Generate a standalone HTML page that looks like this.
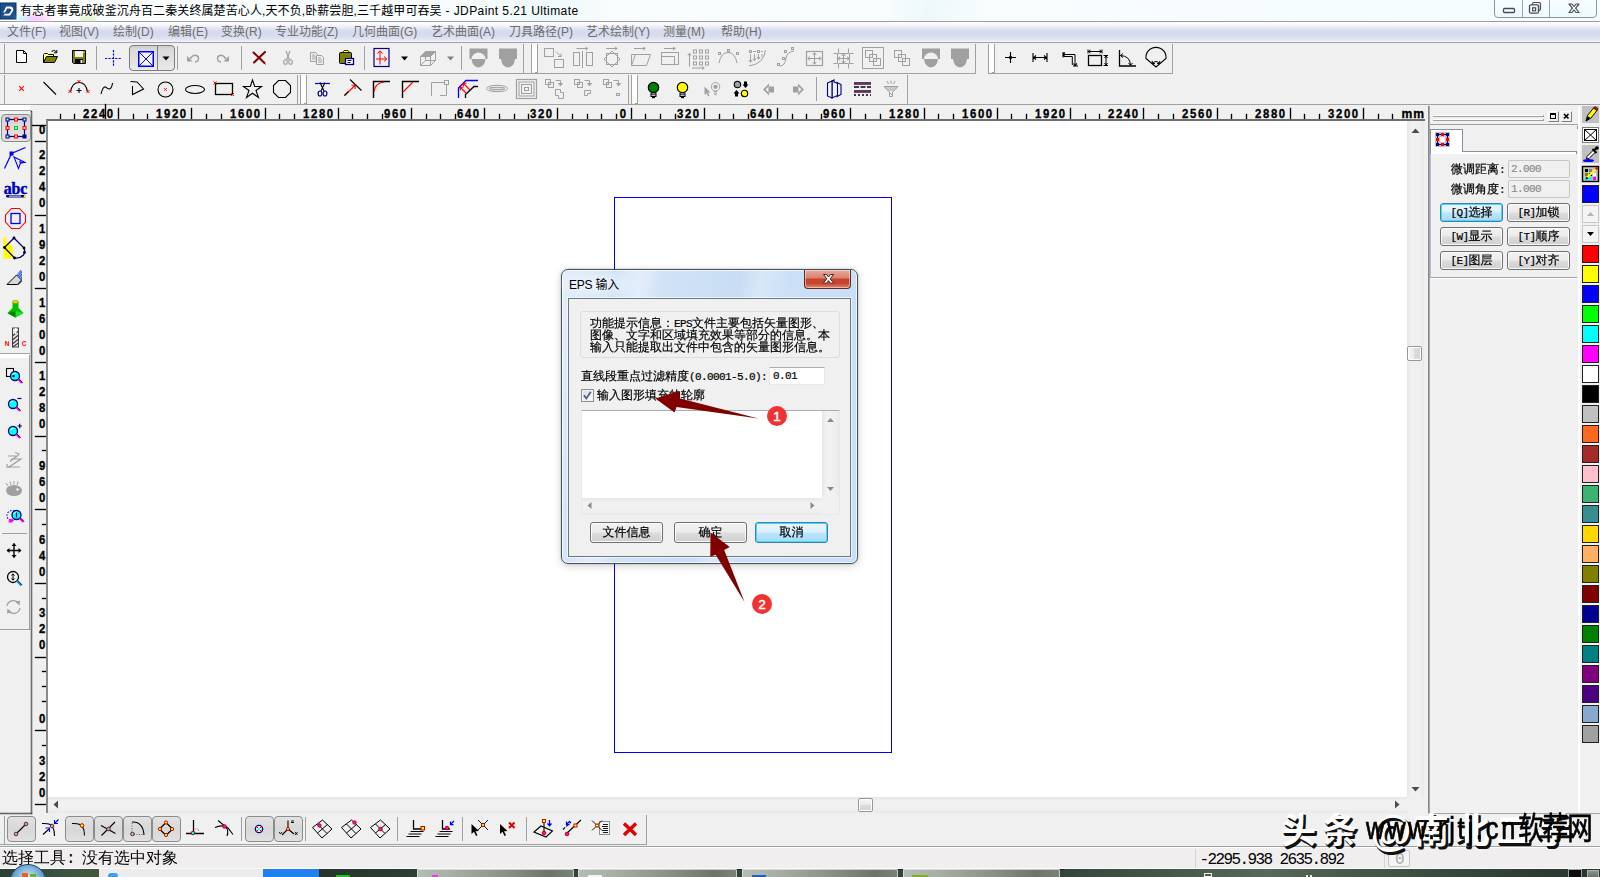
<!DOCTYPE html>
<html lang="zh-CN"><head><meta charset="utf-8"><title>JDPaint 5.21 Ultimate</title>
<style>
*{box-sizing:border-box;margin:0;padding:0}
html,body{width:1600px;height:877px;overflow:hidden;background:#f0f0f0}
body{font-family:"Liberation Sans","Noto Sans CJK SC",sans-serif;font-size:12px;color:#000}
#app{position:relative;width:1600px;height:877px;overflow:hidden;background:#f0f0f0}
.abs{position:absolute}
svg{position:absolute;overflow:visible}
.song{font-family:"Liberation Mono","WenQuanYi Zen Hei","Noto Sans CJK SC",sans-serif;-webkit-text-stroke-width:.2px}
/* title bar */
#title{position:absolute;left:0;top:0;width:1600px;height:22px;background:linear-gradient(100deg,#fbfeff 0%,#f6fcfd 30%,#eef8fa 34%,#f7fcfd 38%,#f9fdfe 55%,#eef8fa 58%,#f8fdfe 62%,#f4fcff 100%);border-bottom:1px solid #9b9b9b}
#title .txt{position:absolute;left:20px;top:2px;font-size:12px;line-height:19px;white-space:nowrap;color:#000;letter-spacing:.1px}
#title .lat{letter-spacing:.42px}
#menubar{position:absolute;left:0;top:22px;width:1600px;height:21px;background:linear-gradient(#fefeff 0,#f6f7fc 3px,#e0e3f2 7px,#d7dbee 9px,#d7dbee 13px,#e0e3f2 17px,#eceef8 19px,#f2f3fa 20px,#a4a4a4 20px,#a4a4a4 21px)}
#menubar span{position:absolute;top:1px;font-size:12px;line-height:18px;color:#6d6d6d;white-space:nowrap}
.song .l,.l{font-family:"Liberation Mono",monospace;font-size:11px;letter-spacing:-0.6px}
.btn7{position:absolute;border:1px solid #707070;border-radius:3px;background:linear-gradient(#f2f2f2 0,#ebebeb 48%,#dddddd 52%,#cfcfcf 100%);box-shadow:inset 0 0 0 1px rgba(255,255,255,.85);text-align:center;font-size:12px;white-space:nowrap;color:#000}
.btn7.def{border-color:#3c7fb1;background:linear-gradient(#eaf6fd 0,#d9f0fc 48%,#bee6fd 52%,#a7d9f5 100%);box-shadow:inset 0 0 0 1px #48d8fb}
.sb16{font-family:"Liberation Mono","WenQuanYi Zen Hei","Noto Sans CJK SC",sans-serif;font-size:16px;line-height:19px;white-space:nowrap;color:#000}
.l8{font-family:"Liberation Mono",monospace;font-size:16px;letter-spacing:-1.6px}

</style></head>
<body>
<div id="app">
<!-- chrome -->
<div id="title">
<svg style="left:0;top:3px" width="16" height="16" viewBox="0 0 16 16"><rect x="0" y="0" width="16" height="16" fill="#1d4f8f"/><rect x="0" y="0" width="16" height="16" fill="none" stroke="#0e2f5e" stroke-width="1"/><path d="M6.2 3.5 L10.5 3.5 Q14.2 4.2 13 8 L10 12.5 L3.2 12.5 L5 10.8 L9 10.8 L11.3 7.6 Q11.8 5.6 9.6 5.4 L7.2 5.4 L5 9.5 L3.2 9.5 Z" fill="#fff"/></svg>
<div class="abs" style="left:17px;top:16px;width:34px;height:5px;background:linear-gradient(90deg,#9ff,#f9f 55%,#fdf);filter:blur(2px);opacity:.8"></div>
<div class="abs" style="left:80px;top:16px;width:16px;height:5px;background:#cfe8b0;filter:blur(2px);opacity:.7"></div>
<div class="txt">有志者事竟成破釜沉舟百二秦关终属楚苦心人,天不负,卧薪尝胆,三千越甲可吞吴<span class="lat"> - JDPaint 5.21 Ultimate</span></div>
<div class="abs" style="left:1494px;top:-4px;width:103px;height:22px;border:1px solid #8a9499;border-radius:0 0 4px 4px;background:linear-gradient(#fafeff,#eefaff)"></div>
<div class="abs" style="left:1522px;top:0;width:1px;height:17px;background:#9aa3a8"></div>
<div class="abs" style="left:1549px;top:0;width:1px;height:17px;background:#9aa3a8"></div>
<svg style="left:1494px;top:0" width="103" height="18" viewBox="0 0 103 18"><rect x="9.5" y="8.5" width="11" height="4" rx="1" fill="#fff" stroke="#4a4a5a" stroke-width="1.3"/><rect x="38.5" y="2.5" width="8" height="8" rx="1.5" fill="#f0f0f0" stroke="#4a4a5a" stroke-width="1.2"/><rect x="35.5" y="4.8" width="9" height="8.4" rx="1.5" fill="#fafafa" stroke="#4a4a5a" stroke-width="1.3"/><rect x="38.6" y="7.8" width="3" height="3" fill="#fff" stroke="#4a4a5a" stroke-width="1.2"/><path d="M75 4 L78 4 L80 6.5 L82 4 L85 4 L81.6 8.2 L85 12.5 L82 12.5 L80 10 L78 12.5 L75 12.5 L78.4 8.2 Z" fill="#fff" stroke="#4a4a5a" stroke-width="1.2" stroke-linejoin="round"/></svg>
</div>
<div id="menubar">
<span style="left:7px">文件(F)</span>
<span style="left:59px">视图(V)</span>
<span style="left:113px">绘制(D)</span>
<span style="left:168px">编辑(E)</span>
<span style="left:221px">变换(R)</span>
<span style="left:275px">专业功能(Z)</span>
<span style="left:352px">几何曲面(G)</span>
<span style="left:431px">艺术曲面(A)</span>
<span style="left:509px">刀具路径(P)</span>
<span style="left:586px">艺术绘制(Y)</span>
<span style="left:663px">测量(M)</span>
<span style="left:721px">帮助(H)</span>
</div>
<!-- toolbars -->
<div class="abs" style="left:129px;top:45px;width:46px;height:26px;border:1px solid #7c7c7c;border-radius:4px;background:linear-gradient(#cfcfcf 0,#dadada 15%,#e9e9e9 100%)"></div><svg style="left:0;top:0" width="1600" height="110" viewBox="0 0 1600 110"><rect x="0" y="73" width="976" height="1" fill="#a0a0a0"/><rect x="988" y="73" width="185" height="1" fill="#a0a0a0"/><rect x="0" y="104" width="1600" height="1" fill="#a0a0a0"/><rect x="4" y="44" width="1" height="30" fill="#a0a0a0"/><rect x="523" y="44" width="1" height="30" fill="#a0a0a0"/><rect x="531" y="44" width="1" height="29" fill="#a0a0a0"/><rect x="532" y="44" width="5" height="28" fill="#fff"/><rect x="537" y="44" width="1" height="29" fill="#a0a0a0"/><rect x="535" y="72" width="2" height="1" fill="#a0a0a0"/><rect x="975" y="44" width="1" height="30" fill="#a0a0a0"/><rect x="988" y="44" width="1" height="29" fill="#a0a0a0"/><rect x="989" y="44" width="5" height="28" fill="#fff"/><rect x="994" y="44" width="1" height="29" fill="#a0a0a0"/><rect x="992" y="72" width="2" height="1" fill="#a0a0a0"/><rect x="1172" y="44" width="1" height="30" fill="#a0a0a0"/><rect x="4" y="75" width="1" height="30" fill="#a0a0a0"/><rect x="297" y="75" width="1" height="30" fill="#a0a0a0"/><rect x="300" y="75" width="1" height="29" fill="#a0a0a0"/><rect x="301" y="75" width="5" height="28" fill="#fff"/><rect x="306" y="75" width="1" height="29" fill="#a0a0a0"/><rect x="304" y="103" width="2" height="1" fill="#a0a0a0"/><rect x="628" y="75" width="1" height="30" fill="#a0a0a0"/><rect x="631" y="75" width="1" height="29" fill="#a0a0a0"/><rect x="632" y="75" width="5" height="28" fill="#fff"/><rect x="637" y="75" width="1" height="29" fill="#a0a0a0"/><rect x="635" y="103" width="2" height="1" fill="#a0a0a0"/><rect x="907" y="75" width="1" height="30" fill="#a0a0a0"/><g transform="translate(21,58)"><path d="M-4.5 -7.5 L2.5 -7.5 L5.5 -4.5 L5.5 4.5 L-4.5 4.5 Z" fill="#fff" stroke="#000" stroke-width="1"/><path d="M2.5 -7.5 L2.5 -4.5 L5.5 -4.5" fill="none" stroke="#000" stroke-width="1"/></g><g transform="translate(50,58)"><path d="M-6.5 4.5 L-6.5 -3.5 L-5.5 -4.5 L-2.5 -4.5 L-1.5 -3.5 L3.5 -3.5 L3.5 -1.5" fill="#ffff80" stroke="#000" stroke-width="1"/><path d="M-6.5 4.5 L-3.5 -1.5 L7.5 -1.5 L4.5 4.5 Z" fill="#808000" stroke="#000" stroke-width="1"/><path d="M1.5 -6.5 Q4.5 -9 6.5 -6 M6.8 -8 L6.8 -5.2 L4 -5.2" fill="none" stroke="#000" stroke-width="1"/></g><g transform="translate(79,58)"><path d="M-6.5 -7.5 L6.5 -7.5 L6.5 5.5 L-5.5 5.5 L-6.5 4.5 Z" fill="#808000" stroke="#000" stroke-width="1"/><rect x="-4" y="-7" width="8" height="6" fill="#f0f0f0"/><rect x="4.5" y="-6.5" width="1" height="1.5" fill="#fff"/><rect x="-4" y="1" width="8" height="4.5" fill="#000"/><rect x="1.5" y="2" width="2" height="3" fill="#f0f0f0"/></g><rect x="96" y="46" width="1" height="24" fill="#a0a0a0"/><g transform="translate(113.5,58.5)"><path d="M0 -8.5 L0 8.5 M-8.5 0 L8.5 0" stroke="#00f" stroke-width="1.2" stroke-dasharray="2.2 1.2" fill="none"/></g><rect x="157" y="46" width="1" height="24" fill="#7c7c7c"/><rect x="138.75" y="51.75" width="14.5" height="14.5" fill="#f6f6e6" stroke="#00f" stroke-width="1.5"/><path d="M139 52 L153 66 M153 52 L139 66" stroke="#00f" stroke-width="1" fill="none"/><g transform="translate(166,58.5)"><path d="M-3.5 -2 L3.5 -2 L0 2 Z" fill="#000"/></g><rect x="177" y="46" width="1" height="24" fill="#a0a0a0"/><g transform="translate(193,58)"><path d="M-6 -2 L-6 3.5 L-0.5 3.5 Z" fill="#a0a0a0"/><path d="M-3 1 Q0 -3.5 3.5 -2.5 Q6.5 -1 5 2.5 Q4 4 2 4" fill="none" stroke="#a0a0a0" stroke-width="1.4"/></g><g transform="translate(223,58)"><g transform="scale(-1,1)"><path d="M-6 -2 L-6 3.5 L-0.5 3.5 Z" fill="#a0a0a0"/><path d="M-3 1 Q0 -3.5 3.5 -2.5 Q6.5 -1 5 2.5 Q4 4 2 4" fill="none" stroke="#a0a0a0" stroke-width="1.4"/></g></g><rect x="241" y="46" width="1" height="24" fill="#a0a0a0"/><g transform="translate(259.5,58)"><path d="M-6 -5.5 L5 5 M5.5 -6 L-5.5 4.5" stroke="#800000" stroke-width="2" stroke-linecap="round" fill="none"/><path d="M4.5 5 L6 6.5" stroke="#800000" stroke-width="1"/></g><g transform="translate(288,58)"><path d="M-2 -7 L1.5 2 M2 -7 L-1.5 2" stroke="#a0a0a0" stroke-width="1.2" fill="none"/><ellipse cx="-2.5" cy="4" rx="1.8" ry="2.3" fill="none" stroke="#a0a0a0" stroke-width="1.1"/><ellipse cx="2.5" cy="4" rx="1.8" ry="2.3" fill="none" stroke="#a0a0a0" stroke-width="1.1"/></g><g transform="translate(314,57)"><path d="M-3.5 -4.5 L1.5 -4.5 L3.5 -2.5 L3.5 4.5 L-3.5 4.5 Z" fill="#f0f0f0" stroke="#a0a0a0"/><path d="M-2 -2 L1 -2 M-2 0 L2 0 M-2 2 L2 2" stroke="#a0a0a0" stroke-width="1"/></g><g transform="translate(320,60)"><path d="M-3.5 -4.5 L1.5 -4.5 L3.5 -2.5 L3.5 4.5 L-3.5 4.5 Z" fill="#f0f0f0" stroke="#a0a0a0"/><path d="M-2 -2 L1 -2 M-2 0 L2 0 M-2 2 L2 2" stroke="#a0a0a0" stroke-width="1"/></g><g transform="translate(346,58)"><rect x="-6.5" y="-5.5" width="12" height="11" rx="1" fill="#808000" stroke="#000"/><path d="M-3.5 -5.5 L-2 -7.5 L2 -7.5 L3.5 -5.5 Z" fill="#ffff00" stroke="#000" stroke-width="0.8"/><rect x="-0.5" y="0.5" width="8" height="6" fill="#fff" stroke="#000080" stroke-width="1.3"/><path d="M1.5 2.5 L5.5 2.5 M1.5 4.5 L4.5 4.5" stroke="#000080" stroke-width="1"/></g><rect x="364" y="46" width="1" height="24" fill="#a0a0a0"/><g transform="translate(381.5,57.5)"><rect x="-7.5" y="-9" width="15" height="18" fill="none" stroke="#000080" stroke-width="1.2"/><path d="M-1.5 7 L-1.5 -6.5 M-4 -4 L-1.5 -6.8 L1 -4 M-5.5 1.5 L5 1.5 M2.5 -1 L5.3 1.5 L2.5 4" stroke="#f00" stroke-width="1" fill="none"/></g><g transform="translate(404.5,58.5)"><path d="M-3.5 -2 L3.5 -2 L0 2 Z" fill="#000"/></g><g transform="translate(428,58)"><path d="M-7.5 -1.5 L2.5 -1.5 L2.5 7.5 L-7.5 7.5 Z M-7.5 -1.5 L-2.5 -6.5 L7.5 -6.5 L2.5 -1.5 M7.5 -6.5 L7.5 2.5 L2.5 7.5 M-7.5 7.5 L-2.5 2.5 L7.5 2.5 M-2.5 2.5 L-2.5 -6.5" fill="none" stroke="#a0a0a0" stroke-width="1"/><path d="M-7.5 -1.5 L-2.5 -6.5 L7.5 -6.5 L2.5 -1.5 Z" fill="#a0a0a0"/></g><g transform="translate(450.5,58.5)"><path d="M-3.5 -2 L3.5 -2 L0 2 Z" fill="#808080"/></g><rect x="461" y="46" width="1" height="24" fill="#a0a0a0"/><g transform="translate(478.5,58)"><path d="M-9 -9.5 L9 -9.5 L9 1 L7 1 Q6 9 0 9.5 Q-6 9 -7 1 L-9 1 Z" fill="#a0a0a0"/><path d="M-7 1 A7 6.5 0 0 1 7 1 Z" fill="#f0f0f0"/></g><g transform="translate(508,58)"><path d="M-9 -9.5 L9 -9.5 L9 1 L7 1 Q6 9 0 9.5 Q-6 9 -7 1 L-9 1 Z" fill="#a0a0a0"/></g><g transform="translate(553.5,58)"><rect x="-9" y="-9.5" width="9" height="8" fill="none" stroke="#a0a0a0" stroke-width="1"/><rect x="1" y="1.5" width="9" height="8" fill="none" stroke="#a0a0a0" stroke-width="1"/><path d="M2.5 -6.5 L7.5 -1.5 M7.5 -4.5 L7.5 -1.5 L4.5 -1.5" fill="none" stroke="#a0a0a0" stroke-width="1"/></g><g transform="translate(583,58)"><rect x="-9.5" y="-5.5" width="6" height="13" fill="none" stroke="#a0a0a0" stroke-width="1"/><rect x="3.5" y="-5.5" width="6" height="13" fill="none" stroke="#a0a0a0" stroke-width="1"/><path d="M-0.5 -7 L-0.5 10 M-6.5 -9.5 L4.5 -9.5 M2.5 -11 L4.8 -9.5 L2.5 -8" fill="none" stroke="#a0a0a0" stroke-width="1"/></g><g transform="translate(612,59)"><rect x="-5.5" y="-5.5" width="11" height="11" fill="none" stroke="#a0a0a0" stroke-width="1"/><path d="M0 -8 L8 0 L0 8 L-8 0 Z" fill="none" stroke="#a0a0a0" stroke-width="1"/><path d="M-6 -10.5 L5 -10.5 M3 -12 L5.3 -10.5 L3 -9" fill="none" stroke="#a0a0a0" stroke-width="1"/></g><g transform="translate(641,58)"><path d="M-9.5 7.5 L-5.5 -3.5 L9.5 -3.5 L5.5 7.5 Z M-9.5 7.5 L-9.5 -3.5 L-5.5 -3.5" fill="none" stroke="#a0a0a0" stroke-width="1"/><path d="M-7 -9.5 L4 -9.5 M2 -11 L4.3 -9.5 L2 -8" fill="none" stroke="#a0a0a0" stroke-width="1"/></g><g transform="translate(670,58)"><rect x="-8.5" y="-5.5" width="17" height="12" fill="none" stroke="#a0a0a0" stroke-width="1"/><path d="M-8.500 -1.500 L4.500 -1.500 L4.500 6.500" fill="none" stroke="#a0a0a0" stroke-width="1"/><path d="M-6 -9.500 L5 -9.500 M3 -11 L5.3 -9.500 L3 -8" fill="none" stroke="#a0a0a0" stroke-width="1"/></g><g transform="translate(698,58.5)"><rect x="-4.5" y="-8.5" width="3" height="3" fill="none" stroke="#a0a0a0" stroke-width="1"/><rect x="-4.5" y="-2.5" width="3" height="3" fill="none" stroke="#a0a0a0" stroke-width="1"/><rect x="-4.5" y="3.5" width="3" height="3" fill="none" stroke="#a0a0a0" stroke-width="1"/><rect x="1.5" y="-8.5" width="3" height="3" fill="none" stroke="#a0a0a0" stroke-width="1"/><rect x="1.5" y="-2.5" width="3" height="3" fill="none" stroke="#a0a0a0" stroke-width="1"/><rect x="1.5" y="3.5" width="3" height="3" fill="none" stroke="#a0a0a0" stroke-width="1"/><rect x="7.5" y="-8.5" width="3" height="3" fill="none" stroke="#a0a0a0" stroke-width="1"/><rect x="7.5" y="-2.5" width="3" height="3" fill="none" stroke="#a0a0a0" stroke-width="1"/><rect x="7.5" y="3.5" width="3" height="3" fill="none" stroke="#a0a0a0" stroke-width="1"/><path d="M-8.5 8 L-8.5 -5 M-10 -3 L-8.5 -5.300 L-7 -3 M-6 9.500 L6 9.500 M4 8 L6.300 9.500 L4 11" fill="none" stroke="#a0a0a0" stroke-width="1"/></g><g transform="translate(728,58)"><path d="M-9 5 Q-7 -5.500 0 -5.500 Q7 -5.500 9 5" fill="none" stroke="#a0a0a0" stroke-width="1"/><rect x="-9.5" y="-5.5" width="2" height="2" fill="none" stroke="#a0a0a0" stroke-width="1"/><rect x="-0.5" y="-8.5" width="2" height="2" fill="none" stroke="#a0a0a0" stroke-width="1"/><rect x="8.5" y="-5.500" width="2" height="2" fill="none" stroke="#a0a0a0" stroke-width="1"/></g><g transform="translate(757,58)"><path d="M-8 8 Q7 6 8.500 -8 M-6.500 -4 L-6.500 4 M-8 2 L-6.500 4.300 L-5 2 M-2.500 -4 L-2.500 2.500 M-4 0.500 L-2.500 2.800 L-1 0.500 M1.500 -4 L1.500 1 M0 -1 L1.500 1.300 L3 -1 M5 -4 L5 -1" fill="none" stroke="#a0a0a0" stroke-width="1"/><rect x="-7.500" y="-7.500" width="2" height="2" fill="none" stroke="#a0a0a0" stroke-width="1"/><rect x="0.500" y="-7.500" width="2" height="2" fill="none" stroke="#a0a0a0" stroke-width="1"/><path d="M-4 -6.500 L-1 -6.500 M4 -6.500 L6 -6.500" fill="none" stroke="#a0a0a0" stroke-width="1"/></g><g transform="translate(786,58)"><path d="M-6 8 Q-1 8 0 0 Q1 -6 8 -7" fill="none" stroke="#a0a0a0" stroke-width="1"/><rect x="-8.500" y="5.500" width="2" height="2" fill="none" stroke="#a0a0a0" stroke-width="1"/><rect x="-3.500" y="-0.500" width="2" height="2" fill="none" stroke="#a0a0a0" stroke-width="1"/><rect x="-1.500" y="-7.500" width="2" height="2" fill="none" stroke="#a0a0a0" stroke-width="1"/><rect x="5.500" y="-10.500" width="2" height="2" fill="none" stroke="#a0a0a0" stroke-width="1"/></g><g transform="translate(814.5,58.5)"><rect x="-8" y="-7" width="16" height="14" fill="none" stroke="#a0a0a0" stroke-width="1.2"/><path d="M0 -5.500 L0 5.500 M-6.500 0 L6.500 0 M-1.800 -3.500 L0 -5.800 L1.800 -3.500 M-1.800 3.500 L0 5.800 L1.800 3.500 M-4.500 -1.800 L-6.800 0 L-4.500 1.800 M4.500 -1.800 L6.800 0 L4.500 1.800" fill="none" stroke="#a0a0a0" stroke-width="1"/></g><g transform="translate(843.5,58.5)"><path d="M-5 -10 L-5 -5 L5 -5 L5 -10 M-5 10 L-5 5 L5 5 L5 10 M-10 -5 L-6 -5 L-6 5 L-10 5 M10 -5 L6 -5 L6 5 L10 5" fill="none" stroke="#a0a0a0" stroke-width="1"/><path d="M0 -4.500 L0 4.500 M-5.500 0 L5.500 0 M-1.800 -2.500 L0 -4.800 L1.800 -2.500 M-1.800 2.500 L0 4.800 L1.800 2.500 M-3.500 -1.800 L-5.800 0 L-3.500 1.800 M3.500 -1.800 L5.800 0 L3.500 1.800" fill="none" stroke="#a0a0a0" stroke-width="1"/></g><g transform="translate(873,58)"><rect x="-10.500" y="-10.500" width="21" height="21" fill="none" stroke="#a0a0a0" stroke-width="1"/><rect x="-7.500" y="-7.500" width="7" height="7" fill="none" stroke="#a0a0a0" stroke-width="1"/><rect x="-3.500" y="-3.500" width="7" height="7" fill="none" stroke="#a0a0a0" stroke-width="1"/><rect x="0.500" y="0.500" width="7" height="7" fill="none" stroke="#a0a0a0" stroke-width="1"/></g><g transform="translate(902,58)"><rect x="-7.500" y="-7.500" width="7" height="7" fill="none" stroke="#a0a0a0" stroke-width="1"/><rect x="-3.500" y="-3.500" width="7" height="7" fill="none" stroke="#a0a0a0" stroke-width="1"/><rect x="0.500" y="0.500" width="7" height="7" fill="none" stroke="#a0a0a0" stroke-width="1"/></g><g transform="translate(931,58)"><path d="M-9 -9.5 L9 -9.5 L9 1 L7 1 Q6 9 0 9.5 Q-6 9 -7 1 L-9 1 Z" fill="#a0a0a0"/><path d="M-7 1 A7 6.500 0 0 1 7 1 Z" fill="#f0f0f0"/></g><g transform="translate(960,58)"><path d="M-9 -9.5 L9 -9.5 L9 1 L7 1 Q6 9 0 9.5 Q-6 9 -7 1 L-9 1 Z" fill="#a0a0a0"/></g><g transform="translate(1010.5,57.5)"><path d="M0 -5.500 L0 5.500 M-5.500 0 L5.500 0" fill="none" stroke="#000" stroke-width="1.1"/><path d="M0 -2.200 L2.200 0 L0 2.200 L-2.200 0 Z" fill="#000"/></g><g transform="translate(1040,57.5)"><path d="M-7 -4.500 L-7 4.500 M7 -4.500 L7 4.500 M-6 0 L6 0 M-4 -2 L-6.300 0 L-4 2 M4 -2 L6.300 0 L4 2" fill="none" stroke="#000" stroke-width="1.1"/></g><g transform="translate(1069.5,58.5)"><path d="M-6 -4 L5.500 -4 L5.500 6.500 M-6 -2 L2.800 -2 L2.800 6.500" fill="none" stroke="#000" stroke-width="1"/><path d="M-6.500 -6.500 L-6.500 -1 M-4.500 -6 L-6.500 -4 L-4.500 -1.800 M3.500 7.500 L8.500 7.500 M4 5 L5.500 7 L7.500 5" fill="none" stroke="#000" stroke-width="1.1"/></g><g transform="translate(1097.5,59)"><rect x="-9" y="-3.500" width="13" height="10" fill="none" stroke="#000" stroke-width="1.300"/><path d="M-9.500 -9.500 L-9.500 -5.500 M4.500 -9.500 L4.500 -5.500 M-9 -7.500 L4 -7.500 M-7 -9 L-9 -7.500 L-7 -6 M2 -9 L4 -7.500 L2 -6 M6 -3.500 L10.500 -3.500 M6 6.500 L10.500 6.500 M8.500 -3 L8.500 6 M7 -1 L8.500 -3 L10 -1 M7 4 L8.500 6 L10 4" fill="none" stroke="#000" stroke-width="1"/></g><g transform="translate(1127,58.5)"><path d="M-7.500 -8.500 L-7.500 7.500 L9 7.500" fill="none" stroke="#000" stroke-width="1.300"/><path d="M-6.500 -3 Q3 -2.500 3.500 6.500 M-4 -5 L-6.500 -3 L-4 -0.800 M1.500 4.500 L3.500 6.800 L5.500 4.500" fill="none" stroke="#000" stroke-width="1"/></g><g transform="translate(1156,58)"><path d="M-10 0.500 L0 9 L10 0.500 A10.06 10.06 0 1 0 -10 0.500 Z" fill="none" stroke="#000" stroke-width="1.1"/><path d="M-3.500 5.500 Q0 1.500 3.500 5.500 M-3.800 3 L-3.500 5.600 L-1 5.300 M3.800 3 L3.500 5.600 L1 5.300" fill="none" stroke="#000" stroke-width="1"/></g><g transform="translate(21.5,88.5)"><path d="M-2.3 -2.3 L2.3 2.3 M2.3 -2.3 L-2.3 2.3" stroke="#f00" stroke-width="1.1" fill="none"/></g><g transform="translate(50,89)"><path d="M-6.500 -7 L6 5.500" fill="none" stroke="#000" stroke-width="1.1"/></g><g transform="translate(79,89)"><path d="M-8.500 3 Q-7 -6.500 0 -6.500 Q7 -6.500 8.500 3" fill="none" stroke="#000" stroke-width="1.1"/><path d="M-2.500 1.500 L2.500 1.500 M0 -1 L0 4" fill="none" stroke="#000" stroke-width="1.1"/><path d="M-10.6 0.8999999999999999 L-7.4 4.1 M-7.4 0.8999999999999999 L-10.6 4.1" stroke="#f00" stroke-width="1" fill="none"/><path d="M7.4 0.8999999999999999 L10.6 4.1 M10.6 0.8999999999999999 L7.4 4.1" stroke="#f00" stroke-width="1" fill="none"/><path d="M-1.5 -9.0 L1.5 -6.0 M1.5 -9.0 L-1.5 -6.0" stroke="#f00" stroke-width="1" fill="none"/></g><g transform="translate(107,89)"><path d="M-6 5 Q-4 -3 -1.500 -2 Q1 0 2.500 0 Q5 -1 5.500 -6" fill="none" stroke="#000" stroke-width="1.1"/></g><g transform="translate(137,89)"><path d="M-6.500 -7.500 L0 -7 L6.500 0 L-4.500 5.500 L-4.500 -3" fill="none" stroke="#000" stroke-width="1.1"/></g><g transform="translate(165.5,89.5)"><circle r="7.500" fill="none" stroke="#000" stroke-width="1.1"/><path d="M-1.3 -1.3 L1.3 1.3 M1.3 -1.3 L-1.3 1.3" stroke="#f00" stroke-width="1" fill="none"/></g><g transform="translate(195,89.5)"><ellipse rx="9.500" ry="4" fill="none" stroke="#000" stroke-width="1.1"/></g><g transform="translate(224,89)"><rect x="-8.500" y="-5.500" width="17" height="11" fill="none" stroke="#000" stroke-width="1.300"/><path d="M-10.5 -7.5 L-7.5 -4.5 M-7.5 -7.5 L-10.5 -4.5" stroke="#f00" stroke-width="1" fill="none"/><path d="M7.0 4.0 L10.0 7.0 M10.0 4.0 L7.0 7.0" stroke="#f00" stroke-width="1" fill="none"/></g><g transform="translate(252.5,89)"><path d="M0 -9 L2.200 -2.500 L9 -2.500 L3.500 1.500 L6 8.500 L0 4.200 L-6 8.500 L-3.500 1.500 L-9 -2.500 L-2.200 -2.500 Z" fill="none" stroke="#000" stroke-width="1.1"/></g><g transform="translate(282,89)"><path d="M-3.500 -8.500 L3.500 -8.500 L8.500 -3.500 L8.500 3.500 L3.500 8.500 L-3.500 8.500 L-8.500 3.500 L-8.500 -3.500 Z" fill="none" stroke="#000" stroke-width="1.1"/></g><g transform="translate(322.5,89)"><path d="M-7.500 -5.500 L7.500 -5.500" stroke="#00f" stroke-width="1.2"/><path d="M-2.500 -6.500 L1.500 2 M2.500 -6.500 L-1.500 2" fill="none" stroke="#000" stroke-width="1.1"/><ellipse cx="-2.500" cy="4.500" rx="1.900" ry="2.500" fill="none" stroke="#000080" stroke-width="1.200"/><ellipse cx="2.500" cy="4.500" rx="1.900" ry="2.500" fill="none" stroke="#000080" stroke-width="1.200"/></g><g transform="translate(352.5,88.5)"><path d="M-2.500 -9 L9 2" fill="none" stroke="#000" stroke-width="1.1"/><path d="M-8 7 L2.500 -3 M-1 -3.300 L2.700 -3.200 L2.600 0.500" fill="none" stroke="#f00" stroke-width="1.100"/><path d="M-8 7 L-4 3" fill="none" stroke="#000" stroke-width="1.1"/></g><g transform="translate(381,89)"><path d="M-7.500 9 L-7.500 -7.500 L9 -7.500" fill="none" stroke="#000" stroke-width="1.400"/><path d="M-7 3 Q-6 -6 3 -7" fill="none" stroke="#f00" stroke-width="1.100"/></g><g transform="translate(410,89)"><path d="M-7.500 9 L-7.500 -7.500 L9 -7.500" fill="none" stroke="#000" stroke-width="1.400"/><path d="M-7 3 L3 -7" fill="none" stroke="#f00" stroke-width="1.100"/></g><g transform="translate(439,89)"><path d="M-7.500 7 L-7.500 -6.500 L5 -6.500 M7.500 -4 L7.500 6.500 L1 6.500" fill="none" stroke="#a0a0a0" stroke-width="1"/><rect x="5.500" y="-8.500" width="4" height="4" fill="none" stroke="#a0a0a0" stroke-width="1"/></g><g transform="translate(468,89)"><path d="M-9.500 9 L-9.500 -1 L-2 -8.500 L10 -8.500" fill="none" stroke="#00f" stroke-width="1.300"/><path d="M-2.500 9 L-2.500 5.500 L6 -2.500 L10 -2.500" fill="none" stroke="#000" stroke-width="1.300"/><path d="M2 1 L-4.500 -5.500 M-1.500 -5.800 L-4.700 -5.700 L-4.600 -2.500 M-1.500 4.500 L-7.500 -1.500 M-4.500 -1.800 L-7.700 -1.700 L-7.600 1.500" fill="none" stroke="#f00" stroke-width="1.100"/></g><g transform="translate(497,88.5)"><ellipse rx="10.500" ry="3.200" fill="none" stroke="#a0a0a0" stroke-width="1"/><path d="M-7 -0.500 L7 -0.500 M-7 1.500 L7 1.500" fill="none" stroke="#c8c8c8" stroke-width="0.800"/><ellipse rx="8" ry="1.200" fill="none" stroke="#a0a0a0" stroke-width="1"/></g><g transform="translate(526.5,89)"><rect x="-10" y="-9.500" width="20" height="19" fill="none" stroke="#a0a0a0" stroke-width="1.200"/><rect x="-7.500" y="-7" width="15" height="14" fill="none" stroke="#a0a0a0" stroke-width="1"/><rect x="-5" y="-4.500" width="10" height="9" fill="none" stroke="#a0a0a0" stroke-width="1"/><rect x="-2" y="-1.500" width="4" height="3" fill="none" stroke="#a0a0a0" stroke-width="1"/></g><g transform="translate(555,89)"><rect x="-9.500" y="-9.500" width="5" height="5" fill="none" stroke="#a0a0a0" stroke-width="1"/><rect x="-6.500" y="-6.500" width="5" height="5" fill="none" stroke="#a0a0a0" stroke-width="1"/><path d="M0.500 -8.500 L5.500 -8.500 L5.500 -3.500 M3.500 -5.500 L5.500 -3 L7.500 -5.500 Z" fill="none" stroke="#a0a0a0" stroke-width="1"/><path d="M0.500 0.500 L5.500 0.500 L5.500 3.500 L8.500 3.500 L8.500 9.500 L3.500 9.500 L3.500 6.500 L0.500 6.500 Z" fill="none" stroke="#a0a0a0" stroke-width="1"/></g><g transform="translate(584,89)"><rect x="-9.500" y="-9.500" width="5" height="5" fill="none" stroke="#a0a0a0" stroke-width="1"/><rect x="-6.500" y="-6.500" width="5" height="5" fill="none" stroke="#a0a0a0" stroke-width="1"/><path d="M0.500 -8.500 L5.500 -8.500 L5.500 -3.500 M3.500 -5.500 L5.500 -3 L7.500 -5.500 Z" fill="none" stroke="#a0a0a0" stroke-width="1"/><path d="M0.500 1.500 L6.500 1.500 L6.500 4.500 L3.500 4.500 L3.500 6.500 L0.500 6.500 Z" fill="none" stroke="#a0a0a0" stroke-width="1"/></g><g transform="translate(613,89)"><rect x="-9.500" y="-9.500" width="5" height="5" fill="none" stroke="#a0a0a0" stroke-width="1"/><rect x="-6.500" y="-6.500" width="5" height="5" fill="none" stroke="#a0a0a0" stroke-width="1"/><path d="M0.500 -8.500 L5.500 -8.500 L5.500 -3.500 M3.500 -5.500 L5.500 -3 L7.500 -5.500 Z" fill="none" stroke="#a0a0a0" stroke-width="1"/><rect x="3.500" y="4.500" width="3" height="2" fill="none" stroke="#a0a0a0" stroke-width="1"/></g><g transform="translate(653.5,89.5)"><circle cx="0" cy="-2" r="5.200" fill="#008000" stroke="#000" stroke-width="1.200"/><rect x="-2.500" y="3.500" width="5" height="3.500" fill="#fff" stroke="#000" stroke-width="1"/><path d="M-2.500 5.300 L2.500 5.300" stroke="#000" stroke-width="0.900"/><rect x="-1.500" y="7.300" width="3" height="1.400" fill="#000"/></g><g transform="translate(682.5,89.5)"><circle cx="0" cy="-2" r="5.200" fill="#ffff00" stroke="#000" stroke-width="1.200"/><rect x="-2.500" y="3.500" width="5" height="3.500" fill="#fff" stroke="#000" stroke-width="1"/><path d="M-2.500 5.300 L2.500 5.300" stroke="#000" stroke-width="0.900"/><rect x="-1.500" y="7.300" width="3" height="1.400" fill="#000"/></g><g transform="translate(712,89)"><path d="M-7.500 -2.500 L-7.500 6 L-5.500 4.200 L-3.800 7.500 L-2.500 6.800 L-4 3.600 L-1.500 3.400 Z" fill="#a0a0a0"/><g transform="translate(3.5,-0.5) scale(0.85)"><circle cx="0" cy="-2" r="5" fill="none" stroke="#a0a0a0" stroke-width="1.100"/><circle cx="0" cy="-2" r="2.500" fill="#a0a0a0"/><path d="M-2 3.500 L2 3.500 M-2 5.500 L2 5.500 M-1.500 7.300 L1.500 7.300" stroke="#a0a0a0" stroke-width="1.100" fill="none"/></g></g><g transform="translate(741,89)"><circle cx="-3.500" cy="-4.500" r="3.200" fill="#a0a0a0" stroke="#000" stroke-width="1.100"/><circle cx="3.500" cy="4.500" r="3.200" fill="#ffff00" stroke="#000" stroke-width="1.100"/><path d="M3 -7.500 L6 -7.500 L6 -4.500 L7.500 -4.500 L4.500 -1 L1.500 -4.500 L3 -4.500 Z" fill="#000"/><path d="M-3 7.500 L-6 7.500 L-6 4.500 L-7.500 4.500 L-4.500 1 L-1.500 4.500 L-3 4.500 Z" fill="#000"/></g><g transform="translate(769,89.5)"><path d="M-6 0 L0 -6 L0 -3 L5 -3 L5 3 L0 3 L0 6 Z" fill="#a0a0a0"/><path d="M-3.500 0 L-0.500 -3 L-0.500 3 Z" fill="#f0f0f0"/></g><g transform="translate(798,89.5)"><g transform="scale(-1,1)"><path d="M-6 0 L0 -6 L0 -3 L5 -3 L5 3 L0 3 L0 6 Z" fill="#a0a0a0"/><path d="M-3.500 0 L-0.500 -3 L-0.500 3 Z" fill="#f0f0f0"/></g></g><rect x="816" y="77" width="1" height="24" fill="#a0a0a0"/><g transform="translate(834,89)"><path d="M3 -6.500 L7 -4.500 L7 5.500 L3 7.500 Z" fill="#f0f0f0" stroke="#000080" stroke-width="1.100"/><path d="M-2 -8 L3.500 -5.500 L3.500 6.500 L-2 9 Z" fill="#f0f0f0" stroke="#000080" stroke-width="1.100"/><path d="M-6.500 -6 L-2 -8 L-2 9 L-6.500 7 Z" fill="#f0f0f0" stroke="#000080" stroke-width="1.100"/><path d="M-2 -8 L0 -9 L0 -7" fill="#f0f0f0" stroke="#000080" stroke-width="1.100"/></g><g transform="translate(862.5,89)"><path d="M-8.500 -6 L8.500 -6" stroke="#000" stroke-width="1.400"/><path d="M-8.500 -4.700 L8.500 -4.700" stroke="#800080" stroke-width="1"/><path d="M-8.500 -2 L8.500 -2" stroke="#000" stroke-width="1.400" stroke-dasharray="5 1.500"/><path d="M-8.500 2 L8.500 2" stroke="#000" stroke-width="1.400"/><path d="M-8.500 3.300 L8.500 3.300" stroke="#800080" stroke-width="1"/><path d="M-8.500 6 L8.500 6" stroke="#000" stroke-width="1.400" stroke-dasharray="2 2"/></g><g transform="translate(891,89)"><path d="M-7 -2.500 L7 -2.500 L1.500 3 L1.500 7.500 L-1.500 7.500 L-1.500 3 Z" fill="none" stroke="#a0a0a0" stroke-width="1"/><path d="M-6 -1 L6 -1 M-4 1 L4 1 M-1 4 L1 6" fill="none" stroke="#a0a0a0" stroke-width="1"/><path d="M-4 -8 L-2.500 -5 M0 -8.500 L0 -5 M4 -8 L2.500 -5" fill="none" stroke="#a0a0a0" stroke-width="1"/></g></svg>
<!-- rulers -->
<svg style="left:0;top:0" width="1600" height="877" viewBox="0 0 1600 877" font-family="Liberation Sans, sans-serif" font-weight="bold" font-size="13.5px" stroke="#000" stroke-width="0.35"><text transform="translate(114.7,118) scale(0.84,1)" text-anchor="end" letter-spacing="1.9">2240</text><text transform="translate(187.7,118) scale(0.84,1)" text-anchor="end" letter-spacing="1.9">1920</text><text transform="translate(261.7,118) scale(0.84,1)" text-anchor="end" letter-spacing="1.9">1600</text><text transform="translate(334.7,118) scale(0.84,1)" text-anchor="end" letter-spacing="1.9">1280</text><text transform="translate(407.7,118) scale(0.84,1)" text-anchor="end" letter-spacing="1.9">960</text><text transform="translate(480.7,118) scale(0.84,1)" text-anchor="end" letter-spacing="1.9">640</text><text transform="translate(553.7,118) scale(0.84,1)" text-anchor="end" letter-spacing="1.9">320</text><text transform="translate(627.7,118) scale(0.84,1)" text-anchor="end" letter-spacing="1.9">0</text><text transform="translate(700.7,118) scale(0.84,1)" text-anchor="end" letter-spacing="1.9">320</text><text transform="translate(773.7,118) scale(0.84,1)" text-anchor="end" letter-spacing="1.9">640</text><text transform="translate(846.7,118) scale(0.84,1)" text-anchor="end" letter-spacing="1.9">960</text><text transform="translate(920.7,118) scale(0.84,1)" text-anchor="end" letter-spacing="1.9">1280</text><text transform="translate(993.7,118) scale(0.84,1)" text-anchor="end" letter-spacing="1.9">1600</text><text transform="translate(1066.7,118) scale(0.84,1)" text-anchor="end" letter-spacing="1.9">1920</text><text transform="translate(1139.7,118) scale(0.84,1)" text-anchor="end" letter-spacing="1.9">2240</text><text transform="translate(1213.7,118) scale(0.84,1)" text-anchor="end" letter-spacing="1.9">2560</text><text transform="translate(1286.7,118) scale(0.84,1)" text-anchor="end" letter-spacing="1.9">2880</text><text transform="translate(1359.7,118) scale(0.84,1)" text-anchor="end" letter-spacing="1.9">3200</text><rect x="118" y="108" width="1" height="11" fill="#000"/><rect x="133" y="114" width="1" height="5" fill="#000"/><rect x="147" y="114" width="1" height="5" fill="#000"/><rect x="191" y="108" width="1" height="11" fill="#000"/><rect x="206" y="114" width="1" height="5" fill="#000"/><rect x="221" y="114" width="1" height="5" fill="#000"/><rect x="265" y="108" width="1" height="11" fill="#000"/><rect x="279" y="114" width="1" height="5" fill="#000"/><rect x="294" y="114" width="1" height="5" fill="#000"/><rect x="338" y="108" width="1" height="11" fill="#000"/><rect x="352" y="114" width="1" height="5" fill="#000"/><rect x="367" y="114" width="1" height="5" fill="#000"/><rect x="382" y="114" width="1" height="5" fill="#000"/><rect x="411" y="108" width="1" height="11" fill="#000"/><rect x="426" y="114" width="1" height="5" fill="#000"/><rect x="440" y="114" width="1" height="5" fill="#000"/><rect x="455" y="114" width="1" height="5" fill="#000"/><rect x="484" y="108" width="1" height="11" fill="#000"/><rect x="499" y="114" width="1" height="5" fill="#000"/><rect x="514" y="114" width="1" height="5" fill="#000"/><rect x="528" y="114" width="1" height="5" fill="#000"/><rect x="557" y="108" width="1" height="11" fill="#000"/><rect x="572" y="114" width="1" height="5" fill="#000"/><rect x="587" y="114" width="1" height="5" fill="#000"/><rect x="601" y="114" width="1" height="5" fill="#000"/><rect x="616" y="114" width="1" height="5" fill="#000"/><rect x="631" y="108" width="1" height="11" fill="#000"/><rect x="645" y="114" width="1" height="5" fill="#000"/><rect x="660" y="114" width="1" height="5" fill="#000"/><rect x="675" y="114" width="1" height="5" fill="#000"/><rect x="704" y="108" width="1" height="11" fill="#000"/><rect x="719" y="114" width="1" height="5" fill="#000"/><rect x="733" y="114" width="1" height="5" fill="#000"/><rect x="748" y="114" width="1" height="5" fill="#000"/><rect x="777" y="108" width="1" height="11" fill="#000"/><rect x="792" y="114" width="1" height="5" fill="#000"/><rect x="806" y="114" width="1" height="5" fill="#000"/><rect x="821" y="114" width="1" height="5" fill="#000"/><rect x="850" y="108" width="1" height="11" fill="#000"/><rect x="865" y="114" width="1" height="5" fill="#000"/><rect x="880" y="114" width="1" height="5" fill="#000"/><rect x="924" y="108" width="1" height="11" fill="#000"/><rect x="938" y="114" width="1" height="5" fill="#000"/><rect x="953" y="114" width="1" height="5" fill="#000"/><rect x="997" y="108" width="1" height="11" fill="#000"/><rect x="1011" y="114" width="1" height="5" fill="#000"/><rect x="1026" y="114" width="1" height="5" fill="#000"/><rect x="1070" y="108" width="1" height="11" fill="#000"/><rect x="1085" y="114" width="1" height="5" fill="#000"/><rect x="1099" y="114" width="1" height="5" fill="#000"/><rect x="1143" y="108" width="1" height="11" fill="#000"/><rect x="1158" y="114" width="1" height="5" fill="#000"/><rect x="1173" y="114" width="1" height="5" fill="#000"/><rect x="1217" y="108" width="1" height="11" fill="#000"/><rect x="1231" y="114" width="1" height="5" fill="#000"/><rect x="1246" y="114" width="1" height="5" fill="#000"/><rect x="1290" y="108" width="1" height="11" fill="#000"/><rect x="1304" y="114" width="1" height="5" fill="#000"/><rect x="1319" y="114" width="1" height="5" fill="#000"/><rect x="1363" y="108" width="1" height="11" fill="#000"/><rect x="1378" y="114" width="1" height="5" fill="#000"/><rect x="1392" y="114" width="1" height="5" fill="#000"/><rect x="60" y="114" width="1" height="5" fill="#000"/><rect x="74" y="114" width="1" height="5" fill="#000"/><text transform="translate(1425,118) scale(0.9,1)" text-anchor="end" letter-spacing="1">mm</text><rect x="105" y="104" width="1" height="15" fill="#000"/><rect x="31" y="111" width="1" height="703" fill="#a0a0a0"/><rect x="0" y="813" width="32" height="1" fill="#a0a0a0"/><rect x="35" y="141" width="12" height="1" fill="#000"/><text transform="translate(42.2,133.5) scale(0.84,1)" text-anchor="middle">0</text><rect x="35" y="215" width="12" height="1" fill="#000"/><text transform="translate(42.2,159.2) scale(0.84,1)" text-anchor="middle">2</text><text transform="translate(42.2,175.2) scale(0.84,1)" text-anchor="middle">2</text><text transform="translate(42.2,191.2) scale(0.84,1)" text-anchor="middle">4</text><text transform="translate(42.2,207.2) scale(0.84,1)" text-anchor="middle">0</text><rect x="35" y="288" width="12" height="1" fill="#000"/><text transform="translate(42.2,232.8) scale(0.84,1)" text-anchor="middle">1</text><text transform="translate(42.2,248.8) scale(0.84,1)" text-anchor="middle">9</text><text transform="translate(42.2,264.8) scale(0.84,1)" text-anchor="middle">2</text><text transform="translate(42.2,280.8) scale(0.84,1)" text-anchor="middle">0</text><rect x="35" y="362" width="12" height="1" fill="#000"/><text transform="translate(42.2,306.5) scale(0.84,1)" text-anchor="middle">1</text><text transform="translate(42.2,322.5) scale(0.84,1)" text-anchor="middle">6</text><text transform="translate(42.2,338.5) scale(0.84,1)" text-anchor="middle">0</text><text transform="translate(42.2,354.5) scale(0.84,1)" text-anchor="middle">0</text><rect x="35" y="436" width="12" height="1" fill="#000"/><text transform="translate(42.2,380.2) scale(0.84,1)" text-anchor="middle">1</text><text transform="translate(42.2,396.2) scale(0.84,1)" text-anchor="middle">2</text><text transform="translate(42.2,412.2) scale(0.84,1)" text-anchor="middle">8</text><text transform="translate(42.2,428.2) scale(0.84,1)" text-anchor="middle">0</text><rect x="42" y="450" width="5" height="1" fill="#000"/><rect x="35" y="509" width="12" height="1" fill="#000"/><text transform="translate(42.2,469.8) scale(0.84,1)" text-anchor="middle">9</text><text transform="translate(42.2,485.8) scale(0.84,1)" text-anchor="middle">6</text><text transform="translate(42.2,501.8) scale(0.84,1)" text-anchor="middle">0</text><rect x="42" y="524" width="5" height="1" fill="#000"/><rect x="35" y="583" width="12" height="1" fill="#000"/><text transform="translate(42.2,543.5) scale(0.84,1)" text-anchor="middle">6</text><text transform="translate(42.2,559.5) scale(0.84,1)" text-anchor="middle">4</text><text transform="translate(42.2,575.5) scale(0.84,1)" text-anchor="middle">0</text><rect x="42" y="598" width="5" height="1" fill="#000"/><rect x="35" y="657" width="12" height="1" fill="#000"/><text transform="translate(42.2,617.1) scale(0.84,1)" text-anchor="middle">3</text><text transform="translate(42.2,633.1) scale(0.84,1)" text-anchor="middle">2</text><text transform="translate(42.2,649.1) scale(0.84,1)" text-anchor="middle">0</text><rect x="42" y="671" width="5" height="1" fill="#000"/><rect x="42" y="686" width="5" height="1" fill="#000"/><rect x="42" y="701" width="5" height="1" fill="#000"/><rect x="35" y="730" width="12" height="1" fill="#000"/><text transform="translate(42.2,722.8) scale(0.84,1)" text-anchor="middle">0</text><rect x="42" y="745" width="5" height="1" fill="#000"/><rect x="35" y="804" width="12" height="1" fill="#000"/><text transform="translate(42.2,764.5) scale(0.84,1)" text-anchor="middle">3</text><text transform="translate(42.2,780.5) scale(0.84,1)" text-anchor="middle">2</text><text transform="translate(42.2,796.5) scale(0.84,1)" text-anchor="middle">0</text><rect x="32" y="125" width="15" height="1" fill="#000"/></svg>
<!-- lefttools -->
<div class="abs" style="left:0;top:105px;width:30px;height:5px;background:#fff"></div><div class="abs" style="left:0;top:110px;width:31px;height:1px;background:#a0a0a0"></div><div class="abs" style="left:0;top:353px;width:30px;height:5px;background:#fff;border-top:1px solid #a0a0a0"></div><div class="abs" style="left:29px;top:355px;width:1px;height:275px;background:#a0a0a0"></div><div class="abs" style="left:0;top:629px;width:31px;height:1px;background:#a0a0a0"></div><div class="abs" style="left:2px;top:533px;width:25px;height:1px;background:#a0a0a0"></div><div class="abs" style="left:1px;top:114px;width:30px;height:28px;border:1px solid #8c8c8c;border-radius:4px;background:linear-gradient(#d6d6d6,#e2e2e2)"></div><svg style="left:0;top:0" width="50" height="877" viewBox="0 0 50 877"><g transform="translate(16,128)"><rect x="-8.500" y="-8.500" width="17" height="17" fill="none" stroke="#000080" stroke-width="1.200"/><rect x="-10.0" y="-10.0" width="3.0" height="3.0" fill="#e0e0e0" stroke="#000080" stroke-width="1"/><rect x="7.0" y="-10.0" width="3.0" height="3.0" fill="#e0e0e0" stroke="#000080" stroke-width="1"/><rect x="-10.0" y="7.0" width="3.0" height="3.0" fill="#e0e0e0" stroke="#000080" stroke-width="1"/><rect x="7.0" y="7.0" width="3.0" height="3.0" fill="#000080" stroke="#000080" stroke-width="1"/><rect x="-1.5" y="-10.0" width="3.0" height="3.0" fill="#e0e0e0" stroke="#f00" stroke-width="1"/><rect x="-1.5" y="7.0" width="3.0" height="3.0" fill="#e0e0e0" stroke="#f00" stroke-width="1"/><rect x="-10.0" y="-1.5" width="3.0" height="3.0" fill="#e0e0e0" stroke="#f00" stroke-width="1"/><rect x="7.0" y="-1.5" width="3.0" height="3.0" fill="#e0e0e0" stroke="#f00" stroke-width="1"/><rect x="-1.5" y="-1.5" width="3.0" height="3.0" fill="#e0e0e0" stroke="#00d000" stroke-width="1"/></g><g transform="translate(15.5,158)"><path d="M-11 10.500 L-4 -4.500 L10 -10.500" fill="none" stroke="#00f" stroke-width="1.200"/><rect x="-6" y="-6.500" width="4" height="4" fill="#00f"/><path d="M-1.500 -1 L9.500 4.500 L5 5 L3 10.500 Z" fill="none" stroke="#00f" stroke-width="1.100"/><path d="M3.500 3 L9.500 4.500 L4.500 5.500 Z" fill="#00f"/></g><text x="15.500" y="193.500" text-anchor="middle" font-family="Liberation Serif, serif" font-weight="bold" font-size="16px" fill="#0000c0" stroke="#0000c0" stroke-width="0.4" letter-spacing="-0.2">abc</text><rect x="6" y="195" width="20" height="2.500" rx="1.200" fill="#000080"/><rect x="9" y="195.600" width="12" height="1" fill="#e8e8ff"/><circle cx="25" cy="196.200" r="1.200" fill="#ffff00"/><g transform="translate(15.5,218.5)"><path d="M-4 -10 L4 -10 L10 -3.500 L10 3.500 L4 10 L-4 10 L-10 3.500 L-10 -3.500 Z" fill="none" stroke="#f00" stroke-width="1.100"/><rect x="-4.500" y="-5" width="9" height="10" fill="none" stroke="#00f" stroke-width="1.300"/></g><g transform="translate(15.5,248)"><path d="M-12 -11 L-10 -11 L-9 -7 L-5 -4 L-3 -1 L-2 10 L-12 11 Z" fill="#ffff00"/><path d="M-11 -0.500 L-1.500 -10 L8.500 0 Q10 4 8 7 Q4 11 -1 10 Z" fill="none" stroke="#000080" stroke-width="1.300"/><circle cx="-1.500" cy="-10" r="1.400" fill="#000"/><circle cx="-11" cy="-0.500" r="1.400" fill="#000"/><circle cx="8.500" cy="0" r="1.400" fill="#000"/><circle cx="9" cy="4.500" r="1.400" fill="#000"/><circle cx="-1" cy="10" r="1.400" fill="#000"/></g><g transform="translate(15.5,278)"><path d="M-8.500 6.500 L1 -3 L6 2 L2 6.500 Z" fill="#d8d8d8" stroke="#000" stroke-width="1"/><path d="M1 -3 L5 -8 L6.500 -7 L6.500 0 L6 2 Z" fill="#4060e0"/><path d="M2 -3 L6 -7 M3 -1.500 L6.500 -5 M4.500 0 L6.500 -2.500" stroke="#c0d0ff" stroke-width="0.700"/><path d="M2 6.500 L6 2 L6.500 3.500 L3 7 Z" fill="#404040"/></g><g transform="translate(15.5,308)"><path d="M-8 5 L-3 0 L-3 -6 L3 -6 L3 0 L8 5 L0 9.500 Z" fill="#00c000"/><path d="M-8 5 L0 9.500 L8 5 L0 3 Z" fill="#20e020"/><path d="M-8 5 L0 9.500 L0 3 Z" fill="#008000"/><ellipse cx="0" cy="-6" rx="3" ry="1.600" fill="#e0e000" stroke="#808000" stroke-width="0.600"/></g><g transform="translate(15.5,338)"><rect x="-3" y="-10" width="6" height="19" fill="#e8e8e8" stroke="#404040" stroke-width="1"/><path d="M-3 -2 L3 -7 M-3 2 L3 -3 M-3 6 L3 1 M-3 9 L3 5" stroke="#404040" stroke-width="1.300"/><rect x="-0.500" y="-10" width="1.500" height="6" fill="#fff"/></g><text x="7" y="346" text-anchor="middle" font-family="Liberation Sans, sans-serif" font-weight="bold" font-size="6.500px" fill="#f00">N</text><text x="24" y="346" text-anchor="middle" font-family="Liberation Sans, sans-serif" font-weight="bold" font-size="6.500px" fill="#f00">C</text><g transform="translate(14,376)"><rect x="-7.500" y="-7.500" width="7" height="8" fill="#f0f0f0" stroke="#000" stroke-width="1.100"/><g transform="translate(1,0)"><circle cx="0" cy="0" r="4.500" fill="#00ffff" stroke="#000080" stroke-width="1.300"/><path d="M-2.500 -1 A3 3 0 0 1 0.500 -3" fill="none" stroke="#fff" stroke-width="1"/><path d="M3.200 3.200 L7 7" stroke="#ff00ff" stroke-width="2"/><path d="M3.600 2.600 L7.600 6.600" stroke="#000" stroke-width="0.800"/></g><circle cx="-0.500" cy="0" r="1.200" fill="#000"/></g><g transform="translate(13,404)"><circle cx="0" cy="0" r="4.500" fill="#00ffff" stroke="#000080" stroke-width="1.300"/><path d="M-2.500 -1 A3 3 0 0 1 0.500 -3" fill="none" stroke="#fff" stroke-width="1"/><path d="M3.200 3.200 L7 7" stroke="#ff00ff" stroke-width="2"/><path d="M3.600 2.600 L7.600 6.600" stroke="#000" stroke-width="0.800"/><path d="M4.500 -5.500 L8.500 -5.500" stroke="#000080" stroke-width="1.200"/></g><g transform="translate(13,431)"><circle cx="0" cy="0" r="4.500" fill="#00ffff" stroke="#000080" stroke-width="1.300"/><path d="M-2.500 -1 A3 3 0 0 1 0.500 -3" fill="none" stroke="#fff" stroke-width="1"/><path d="M3.200 3.200 L7 7" stroke="#ff00ff" stroke-width="2"/><path d="M3.600 2.600 L7.600 6.600" stroke="#000" stroke-width="0.800"/><path d="M4.500 -5 L9 -5 M6.700 -7.200 L6.700 -2.800" stroke="#000080" stroke-width="1.200"/></g><g transform="translate(14,460.5)"><path d="M-6 -4.500 L3 -4.500 L-4 1 M-3 -1.500 L7 -1.500 L-5 6.500 L6 6.500 M1 -8 L5 -6.500 L3 -4" fill="none" stroke="#a0a0a0" stroke-width="1.200"/><path d="M-7 3.500 L-7 6.500 L-4 6.500" fill="none" stroke="#a0a0a0" stroke-width="1.200"/></g><g transform="translate(14,490)"><ellipse cx="0" cy="0.500" rx="8" ry="5.500" fill="#a0a0a0"/><circle cx="3.500" cy="-0.500" r="1.300" fill="#f0f0f0"/><path d="M-6 -4 L-8 -7 M-3 -5 L-4 -8.500 M0 -5.500 L0 -9 M3 -5 L4 -8.500" stroke="#a0a0a0" stroke-width="1"/></g><g transform="translate(15,515.5)"><circle cx="-3" cy="0" r="5" fill="none" stroke="#00f" stroke-width="1.100" stroke-dasharray="1.500 1.500"/><g transform="translate(1.5,-0.5)"><circle cx="0" cy="0" r="4.500" fill="#00ffff" stroke="#000080" stroke-width="1.300"/><path d="M-2.500 -1 A3 3 0 0 1 0.500 -3" fill="none" stroke="#fff" stroke-width="1"/><path d="M3.200 3.200 L7 7" stroke="#ff00ff" stroke-width="2"/><path d="M3.600 2.600 L7.600 6.600" stroke="#000" stroke-width="0.800"/></g><path d="M1.500 -3 L1.500 2" stroke="#000080" stroke-width="1.200"/><path d="M-6 3.500 L-2 3.500 L-2.500 7 L-6.500 7 Z" fill="#ff00ff"/></g><g transform="translate(14,550.5)"><path d="M0 -7 L0 7 M-7 0 L7 0" stroke="#000" stroke-width="1.400"/><path d="M-2.500 -4.500 L0 -7.500 L2.500 -4.500 Z M-2.500 4.500 L0 7.500 L2.500 4.500 Z M-4.500 -2.500 L-7.500 0 L-4.500 2.500 Z M4.500 -2.500 L7.500 0 L4.500 2.500 Z" fill="#000"/></g><g transform="translate(13,577)"><circle r="5.500" fill="#f4f4f4" stroke="#000" stroke-width="1.300"/><path d="M0 -3 L0 3 M-1.500 -1.500 L0 -3.200 L1.500 -1.500 M-1.500 1.500 L0 3.200 L1.500 1.500" stroke="#000" stroke-width="1" fill="none"/><path d="M4 4 L8.500 8.500" stroke="#00a0c0" stroke-width="2.200"/><path d="M4.600 3.400 L9.200 8" stroke="#000080" stroke-width="0.800"/></g><g transform="translate(13.5,607)"><path d="M-6.500 -1 A6.500 6.500 0 0 1 4.500 -4.500 M6.500 1 A6.500 6.500 0 0 1 -4.500 4.500" fill="none" stroke="#a0a0a0" stroke-width="1.300"/><path d="M2 -5 L6.500 -6.500 L6 -1.500 Z M-2 5 L-6.500 6.500 L-6 1.500 Z" fill="#a0a0a0"/></g></svg>
<!-- canvas -->
<div class="abs" style="left:46px;top:119px;width:1379px;height:694px;background:#f0f0f0;border-top:2px solid #6e6e6e;border-left:2px solid #8a8a8a"></div><div class="abs" style="left:48px;top:121px;width:1359px;height:676px;background:#fff"></div><div class="abs" style="left:1407px;top:121px;width:17px;height:676px;background:linear-gradient(90deg,#e6e6e6,#f1f1f1 4px,#f0f0f0 12px,#e9e9e9)"></div><div class="abs" style="left:1407px;top:346px;width:15px;height:15px;border:1px solid #979797;border-radius:2px;background:linear-gradient(90deg,#f4f4f4,#ececec 45%,#dcdce0 50%,#d4d4d8);box-shadow:inset 0 0 0 1px #fff"></div><div class="abs" style="left:48px;top:797px;width:1359px;height:16px;background:linear-gradient(#e6e6e6,#f1f1f1 4px,#f0f0f0 12px,#e9e9e9)"></div><div class="abs" style="left:858px;top:798px;width:15px;height:14px;border:1px solid #979797;border-radius:2px;background:linear-gradient(#f4f4f4,#ececec 45%,#dcdce0 50%,#d4d4d8);box-shadow:inset 0 0 0 1px #fff"></div><div class="abs" style="left:1407px;top:797px;width:17px;height:16px;background:#f0f0f0"></div><svg style="left:0;top:0" width="1600" height="877" viewBox="0 0 1600 877"><path d="M1411.5 133 L1415.5 128.5 L1419.5 133 Z" fill="#4d4d4d"/><path d="M1411.5 787 L1415.5 791.5 L1419.5 787 Z" fill="#4d4d4d"/><path d="M58 800.500 L53.500 804.500 L58 808.500 Z" fill="#4d4d4d"/><path d="M1395 800.500 L1399.500 804.500 L1395 808.500 Z" fill="#4d4d4d"/><rect x="614.5" y="197.500" width="277" height="555" fill="none" stroke="#0000f0" stroke-width="1"/></svg>
<!-- rightpanel -->
<div class="abs" style="left:1428px;top:106px;width:1px;height:707px;background:#85878f"></div>
<div class="abs" style="left:1429px;top:106px;width:1px;height:707px;background:#a4a6ae"></div>
<div class="abs" style="left:1578px;top:106px;width:2px;height:707px;background:#fff"></div>
<div class="abs" style="left:1428px;top:813px;width:172px;height:1px;background:#a6a6a6"></div>
<div class="abs" style="left:1433px;top:115px;width:111px;height:2px;background:#fff;border-bottom:1px solid #a0a0a0;border-right:1px solid #a0a0a0"></div>
<div class="abs" style="left:1433px;top:119px;width:111px;height:2px;background:#fff;border-bottom:1px solid #a0a0a0;border-right:1px solid #a0a0a0"></div>
<div class="abs" style="left:1548px;top:111px;width:11px;height:11px;background:#f0f0f0;border-top:1px solid #fff;border-left:1px solid #fff;border-right:1px solid #808080;border-bottom:1px solid #808080"></div>
<div class="abs" style="left:1561px;top:111px;width:11px;height:11px;background:#f0f0f0;border-top:1px solid #fff;border-left:1px solid #fff;border-right:1px solid #808080;border-bottom:1px solid #808080"></div>
<svg style="left:0;top:0" width="1600" height="300" viewBox="0 0 1600 300"><rect x="1550.500" y="114" width="5" height="4.500" fill="none" stroke="#000" stroke-width="1"/><rect x="1550" y="113" width="6" height="2" fill="#000"/><path d="M1564 114 L1568.500 118.500 M1568.500 114 L1564 118.500" stroke="#000" stroke-width="1.600"/></svg>
<div class="abs" style="left:1430px;top:124px;width:148px;height:1px;background:#a0a0a0"></div>
<div class="abs" style="left:1577px;top:126px;width:1px;height:3px;background:#8890a0"></div>
<div class="abs" style="left:1430px;top:129px;width:33px;height:25px;background:#fff;border-top:1px solid #8890a0;border-right:1px solid #8890a0;border-left:1px solid #8890a0"></div>
<div class="abs" style="left:1463px;top:151px;width:114px;height:1px;background:#8890a0"></div>
<div class="abs" style="left:1431px;top:152px;width:145px;height:2px;background:#fff"></div>
<div class="abs" style="left:1576px;top:151px;width:1px;height:3px;background:#8890a0"></div>
<div class="abs" style="left:1430px;top:154px;width:1px;height:124px;background:#b8bcc8"></div>
<svg style="left:0;top:0" width="1600" height="300" viewBox="0 0 1600 300"><rect x="1435" y="132" width="15" height="15" fill="#c0c0c0"/><rect x="1440" y="137" width="5" height="5" fill="#fff"/><rect x="1437.500" y="134.500" width="10" height="10" fill="none" stroke="#000080" stroke-width="1"/><rect x="1436" y="133" width="3" height="3" fill="#000080"/><rect x="1446" y="133" width="3" height="3" fill="#000080"/><rect x="1436" y="143" width="3" height="3" fill="#000080"/><rect x="1446" y="143" width="3" height="3" fill="#000080"/><rect x="1441" y="133" width="3" height="3" fill="#f00"/><rect x="1441" y="143" width="3" height="3" fill="#f00"/><rect x="1436" y="138" width="3" height="3" fill="#f00"/><rect x="1446" y="138" width="3" height="3" fill="#f00"/></svg>
<div class="abs song" style="left:1451px;top:161px;font-size:12px;line-height:18px;white-space:nowrap">微调距离<span class="l">:</span></div>
<div class="abs song" style="left:1508px;top:160px;width:62px;height:18px;border:1px solid #c6c6c6;border-radius:2px;background:#f0f0f0;color:#8c8c8c;font-size:12px;line-height:16px;padding-left:2px"><span class="l">2.000</span></div>
<div class="abs song" style="left:1451px;top:181px;font-size:12px;line-height:18px;white-space:nowrap">微调角度<span class="l">:</span></div>
<div class="abs song" style="left:1508px;top:180px;width:62px;height:18px;border:1px solid #c6c6c6;border-radius:2px;background:#f0f0f0;color:#8c8c8c;font-size:12px;line-height:16px;padding-left:2px"><span class="l">1.000</span></div>
<div class="btn7 song def" style="left:1440px;top:203px;width:63px;height:19px;line-height:18px"><span class="l">[Q]</span>选择</div>
<div class="btn7 song" style="left:1507px;top:203px;width:63px;height:19px;line-height:18px"><span class="l">[R]</span>加锁</div>
<div class="btn7 song" style="left:1440px;top:227px;width:63px;height:19px;line-height:18px"><span class="l">[W]</span>显示</div>
<div class="btn7 song" style="left:1507px;top:227px;width:63px;height:19px;line-height:18px"><span class="l">[T]</span>顺序</div>
<div class="btn7 song" style="left:1440px;top:251px;width:63px;height:19px;line-height:18px"><span class="l">[E]</span>图层</div>
<div class="btn7 song" style="left:1507px;top:251px;width:63px;height:19px;line-height:18px"><span class="l">[Y]</span>对齐</div>
<div class="abs" style="left:1431px;top:277px;width:146px;height:2px;background:#a0a0a0;border-bottom:1px solid #fff"></div>
<!-- palette -->
<div class="abs" style="left:1582px;top:245px;width:17px;height:18px;background:#ff0000;border:1px solid #202020"></div>
<div class="abs" style="left:1582px;top:265px;width:17px;height:18px;background:#ffff00;border:1px solid #202020"></div>
<div class="abs" style="left:1582px;top:285px;width:17px;height:18px;background:#0000ff;border:1px solid #202020"></div>
<div class="abs" style="left:1582px;top:305px;width:17px;height:18px;background:#00ff00;border:1px solid #202020"></div>
<div class="abs" style="left:1582px;top:325px;width:17px;height:18px;background:#00ffff;border:1px solid #202020"></div>
<div class="abs" style="left:1582px;top:345px;width:17px;height:18px;background:#ff00ff;border:1px solid #202020"></div>
<div class="abs" style="left:1582px;top:365px;width:17px;height:18px;background:#ffffff;border:1px solid #202020"></div>
<div class="abs" style="left:1582px;top:385px;width:17px;height:18px;background:#000000;border:1px solid #202020"></div>
<div class="abs" style="left:1582px;top:405px;width:17px;height:18px;background:#c0c0c0;border:1px solid #202020"></div>
<div class="abs" style="left:1582px;top:425px;width:17px;height:18px;background:#ff6820;border:1px solid #202020"></div>
<div class="abs" style="left:1582px;top:445px;width:17px;height:18px;background:#a52a2a;border:1px solid #202020"></div>
<div class="abs" style="left:1582px;top:465px;width:17px;height:18px;background:#ffc0cb;border:1px solid #202020"></div>
<div class="abs" style="left:1582px;top:485px;width:17px;height:18px;background:#3cb371;border:1px solid #202020"></div>
<div class="abs" style="left:1582px;top:505px;width:17px;height:18px;background:#388e8e;border:1px solid #202020"></div>
<div class="abs" style="left:1582px;top:525px;width:17px;height:18px;background:#ffd700;border:1px solid #202020"></div>
<div class="abs" style="left:1582px;top:545px;width:17px;height:18px;background:#ffb060;border:1px solid #202020"></div>
<div class="abs" style="left:1582px;top:565px;width:17px;height:18px;background:#808000;border:1px solid #202020"></div>
<div class="abs" style="left:1582px;top:585px;width:17px;height:18px;background:#800000;border:1px solid #202020"></div>
<div class="abs" style="left:1582px;top:605px;width:17px;height:18px;background:#000090;border:1px solid #202020"></div>
<div class="abs" style="left:1582px;top:625px;width:17px;height:18px;background:#008000;border:1px solid #202020"></div>
<div class="abs" style="left:1582px;top:645px;width:17px;height:18px;background:#008080;border:1px solid #202020"></div>
<div class="abs" style="left:1582px;top:665px;width:17px;height:18px;background:#800080;border:1px solid #202020"></div>
<div class="abs" style="left:1582px;top:685px;width:17px;height:18px;background:#4b0082;border:1px solid #202020"></div>
<div class="abs" style="left:1582px;top:705px;width:17px;height:18px;background:#88a8d0;border:1px solid #202020"></div>
<div class="abs" style="left:1582px;top:725px;width:17px;height:18px;background:#a0a0a0;border:1px solid #202020"></div>
<div class="abs" style="left:1582px;top:185px;width:17px;height:18px;background:#0000ff;border:1px solid #202020"></div>
<div class="abs" style="left:1582px;top:205px;width:17px;height:18px;background:#f4f4f4;border:1px solid #c8c8c8"></div>
<div class="abs" style="left:1582px;top:225px;width:17px;height:18px;background:#f4f4f4;border:1px solid #c8c8c8"></div>
<svg style="left:0;top:0" width="1600" height="300" viewBox="0 0 1600 300"><path d="M1587 216 L1590.500 212 L1594 216 Z" fill="#b4b4b4"/><path d="M1587 232 L1590.500 236 L1594 232 Z" fill="#000"/><rect x="1582" y="106" width="17" height="17" fill="#c0c0c0"/><path d="M1586 121 L1587.500 115.500 L1593.500 108 L1597 110.500 L1591 118 Z" fill="#ffff00" stroke="#000" stroke-width="1"/><path d="M1586 121 L1587.500 116 L1590.500 118 Z" fill="#000"/><path d="M1593.500 108 L1595 106.500 L1598 108.500 L1597 110.500 Z" fill="#f00" stroke="#000" stroke-width="0.600"/><rect x="1582.500" y="127.500" width="16" height="15" fill="#fff" stroke="#000" stroke-width="1" stroke-dasharray="1 1"/><rect x="1584.500" y="129.500" width="12" height="11" fill="#fff" stroke="#000" stroke-width="1"/><path d="M1584.500 129.500 L1596.500 140.500 M1596.500 129.500 L1584.500 140.500" stroke="#000" stroke-width="1"/><rect x="1582" y="145" width="17" height="18" fill="#c0c0c0"/><ellipse cx="1588.500" cy="160.500" rx="5.500" ry="1.600" fill="#00f"/><path d="M1586.500 159 L1587 156.500 L1593.500 150 L1595.500 152 L1589 158.500 Z" fill="#fff" stroke="#000" stroke-width="1"/><path d="M1592.500 149 L1596.500 153 M1594 150.500 L1597 147.500" stroke="#000" stroke-width="2"/><circle cx="1597" cy="148" r="1.800" fill="#000"/><rect x="1582.500" y="166.500" width="16" height="15" fill="#c0c0c0" stroke="#000" stroke-width="1.400"/><rect x="1585" y="169" width="3" height="3" fill="#000"/><rect x="1589" y="169" width="3" height="3" fill="#808080"/><rect x="1585" y="173" width="3" height="3" fill="#808000"/><rect x="1589" y="173" width="3" height="3" fill="#000"/><rect x="1585" y="177" width="3" height="3" fill="#00ffff"/><rect x="1589" y="177" width="3" height="3" fill="#00ffff"/><rect x="1593" y="177" width="3" height="3" fill="#ff00ff"/><rect x="1593" y="173" width="3" height="3" fill="#fff"/><path d="M1586.500 178 L1596.500 168.500" stroke="#ffff00" stroke-width="2.200"/><path d="M1585.500 179.500 L1586.500 176.500 L1588.500 178.500 Z" fill="#000"/><path d="M1595.500 167.500 L1597.500 169.500" stroke="#f00" stroke-width="2"/></svg>
<!-- bottombar -->
<div class="abs" style="left:7px;top:816px;width:29px;height:26px;border:1px solid #8c8c8c;border-radius:4px;background:linear-gradient(#e2e2e2,#d8d8d8 50%,#e0e0e0)"></div>
<div class="abs" style="left:65px;top:816px;width:29px;height:26px;border:1px solid #8c8c8c;border-radius:4px;background:linear-gradient(#e2e2e2,#d8d8d8 50%,#e0e0e0)"></div>
<div class="abs" style="left:94px;top:816px;width:29px;height:26px;border:1px solid #8c8c8c;border-radius:4px;background:linear-gradient(#e2e2e2,#d8d8d8 50%,#e0e0e0)"></div>
<div class="abs" style="left:123px;top:816px;width:29px;height:26px;border:1px solid #8c8c8c;border-radius:4px;background:linear-gradient(#e2e2e2,#d8d8d8 50%,#e0e0e0)"></div>
<div class="abs" style="left:152px;top:816px;width:29px;height:26px;border:1px solid #8c8c8c;border-radius:4px;background:linear-gradient(#e2e2e2,#d8d8d8 50%,#e0e0e0)"></div>
<div class="abs" style="left:245px;top:816px;width:29px;height:26px;border:1px solid #8c8c8c;border-radius:4px;background:linear-gradient(#e2e2e2,#d8d8d8 50%,#e0e0e0)"></div>
<div class="abs" style="left:274px;top:816px;width:29px;height:26px;border:1px solid #8c8c8c;border-radius:4px;background:linear-gradient(#e2e2e2,#d8d8d8 50%,#e0e0e0)"></div>
<svg style="left:0;top:0" width="1600" height="877" viewBox="0 0 1600 877"><rect x="0" y="844" width="647" height="1" fill="#a0a0a0"/><rect x="646" y="815" width="1" height="30" fill="#a0a0a0"/><rect x="4" y="816" width="1" height="28" fill="#a0a0a0"/><rect x="241" y="817" width="1" height="24" fill="#a0a0a0"/><rect x="305" y="817" width="1" height="24" fill="#a0a0a0"/><rect x="397" y="817" width="1" height="24" fill="#a0a0a0"/><rect x="462" y="817" width="1" height="24" fill="#a0a0a0"/><rect x="526" y="817" width="1" height="24" fill="#a0a0a0"/><g transform="translate(21,829)"><path d="M-5 5 L5 -5" fill="none" stroke="#000" stroke-width="1.100"/><circle cx="-5" cy="5" r="1.8" fill="#00ffff" stroke="#c00000" stroke-width="1"/><circle cx="5" cy="-5" r="1.8" fill="#00ffff" stroke="#c00000" stroke-width="1"/></g><g transform="translate(50,829)"><path d="M-8 -5.500 Q1 -6 2.500 -2.500 Q4.500 1 4.500 7" fill="none" stroke="#000" stroke-width="1.100"/><path d="M-7 5.500 L-1 0" fill="none" stroke="#000" stroke-width="1.100"/><circle cx="2" cy="-3" r="1.8" fill="#00ffff" stroke="#c00000" stroke-width="1"/><path d="M8.500 -9.500 L4.500 -5.500 M4.500 -9 L4.500 -5.500 L8 -5.500" fill="none" stroke="#00f" stroke-width="1.100"/><path d="M-4.500 -1 L-0.500 -1 L-0.500 3" fill="none" stroke="#00f" stroke-width="1.100"/></g><g transform="translate(79,829)"><path d="M-7 -5.500 Q1 -6 3.500 -2.500 Q5.500 1 5.500 6.500" fill="none" stroke="#000" stroke-width="1.100"/><circle cx="3" cy="-3.5" r="1.8" fill="#ffff00" stroke="#c00000" stroke-width="1"/></g><g transform="translate(108,829)"><path d="M-6.500 6.500 L7 -7 M-7 -3.500 L7.500 4.500" fill="none" stroke="#000" stroke-width="1.100"/><circle cx="0.5" cy="0" r="1.8" fill="#00ffff" stroke="#c00000" stroke-width="1"/></g><g transform="translate(137,829)"><path d="M-5 -7 Q6 -7.500 7 6" fill="none" stroke="#000" stroke-width="1.100"/><path d="M-5 -6 L-5 4 M-3 5.500 L6 5.500" fill="none" stroke="#606060" stroke-width="1" stroke-dasharray="1 1.500"/><circle cx="-4.5" cy="5" r="1.8" fill="#00ffff" stroke="#c00000" stroke-width="1"/></g><g transform="translate(166,829)"><path d="M0 -6.500 L6.500 0 L0 6.500 L-6.500 0 Z" fill="none" stroke="#000" stroke-width="1.100" stroke-linejoin="round"/><circle cx="0" cy="-6.5" r="1.6" fill="#ffff00" stroke="#c00000" stroke-width="1"/><circle cx="6" cy="0" r="1.6" fill="#ffff00" stroke="#c00000" stroke-width="1"/><circle cx="0" cy="6" r="1.6" fill="#ffff00" stroke="#c00000" stroke-width="1"/><circle cx="-6" cy="0" r="1.6" fill="#ffff00" stroke="#c00000" stroke-width="1"/></g><g transform="translate(195,829)"><path d="M-1.500 -9 L-1.500 4.500 M-9 4.500 L9 4.500" fill="none" stroke="#000" stroke-width="1.300"/><path d="M0.500 0 L3.500 0 L3.500 3" fill="none" stroke="#808080" stroke-width="1" stroke-dasharray="1 1"/><circle cx="-2" cy="4" r="1.8" fill="#00ffff" stroke="#c00000" stroke-width="1"/></g><g transform="translate(224,829)"><path d="M-9 -1.500 Q-2 -5 4 -1 L9 5.500" fill="none" stroke="#000" stroke-width="1.100"/><path d="M-6 -8.500 L2 -2 Q5 2 3 7" fill="none" stroke="#000" stroke-width="1.100"/><circle cx="0.5" cy="-2.5" r="1.8" fill="#ff00ff" stroke="#c00000" stroke-width="1"/></g><g transform="translate(259,829)"><circle r="3.600" fill="#fff" stroke="#000080" stroke-width="1.400"/><path d="M-3 -3 L3 3 M3 -3 L-3 3" stroke="#c00000" stroke-width="1"/><circle r="1.300" fill="#00ffff"/></g><g transform="translate(288,829)"><path d="M0 -8.500 L0 0 L-6 6 M0 0 L6 5" fill="none" stroke="#000" stroke-width="1.100"/><circle cx="0" cy="0" r="1.5" fill="#ffff00" stroke="#c00000" stroke-width="1"/><path d="M3 -8 L6 -8 M3 -6.500 L6 -6.500 M-9 3 L-7.500 5 L-6 3 M7 3 L9.500 6 M9.500 3 L7 6" stroke="#000" stroke-width="0.900" fill="none"/></g><g transform="translate(322,829)"><path d="M-9.500 -1.500 L0.500 -9 L10 0 L0 9 Z M-4.500 -5 L5 4.500 M5.500 -4.500 L-4.500 4" fill="none" stroke="#000" stroke-width="1"/><circle cx="-2.5" cy="-3.5" r="1.7" fill="#ff00ff" stroke="#c00000" stroke-width="1"/></g><g transform="translate(351,829)"><path d="M-9.500 -1.500 L0.500 -9 L10 0 L0 9 Z M-4.500 -5 L5 4.500 M5.500 -4.500 L-4.500 4" fill="none" stroke="#000" stroke-width="1"/><circle cx="3.5" cy="-6.5" r="1.7" fill="#ff00ff" stroke="#c00000" stroke-width="1"/></g><g transform="translate(380,829)"><path d="M-9.500 -1.500 L0.500 -9 L10 0 L0 9 Z M-4.500 -5 L5 4.500 M5.500 -4.500 L-4.500 4" fill="none" stroke="#000" stroke-width="1"/><circle cx="0.5" cy="0" r="1.7" fill="#ff00ff" stroke="#c00000" stroke-width="1"/></g><g transform="translate(416,829)"><path d="M-2.500 -9 L-2.500 0 L5 0" fill="none" stroke="#000" stroke-width="1.300"/><path d="M-5.5 2.5 L7.5 2.5 M-7.5 5 L5.500 5 M-9.500 7.500 L3.500 7.500" fill="none" stroke="#000" stroke-width="1.100"/><rect x="5" y="-2.500" width="3.500" height="3.500" fill="#ffff00" stroke="#c00000" stroke-width="1"/></g><g transform="translate(445,829)"><path d="M-2.500 -9 L-2.500 0 L5 0" fill="none" stroke="#000" stroke-width="1.300"/><path d="M-5.5 2.5 L7.5 2.5 M-7.5 5 L5.500 5 M-9.500 7.500 L3.500 7.500" fill="none" stroke="#000" stroke-width="1.100"/><circle cx="2" cy="-1" r="1.8" fill="#ff00ff" stroke="#c00000" stroke-width="1"/><path d="M9 -8 L5.500 -4.500 M5.500 -7.500 L5.500 -4.300 L8.500 -4.300" fill="none" stroke="#00f" stroke-width="1.300"/></g><g transform="translate(479.5,829)"><path d="M-8 -5 L-8 5 L-5.500 2.800 L-3.500 7 L-2 6.300 L-4 2.200 L-0.500 2 Z" fill="#000"/><path d="M-1.500 -9 L8.500 1 M8.500 -9 L-1.500 1" fill="none" stroke="#000" stroke-width="0.900"/><circle cx="3.5" cy="-4" r="1.6" fill="#ffff00" stroke="#c00000" stroke-width="1"/></g><g transform="translate(508,829)"><path d="M-8 -5 L-8 5 L-5.500 2.800 L-3.500 7 L-2 6.300 L-4 2.200 L-0.500 2 Z" fill="#000"/><path d="M1 -6.500 L6.500 -1 M6.500 -6.500 L1 -1" stroke="#e00000" stroke-width="2"/></g><g transform="translate(543,829)"><path d="M-9 3 L-2 -3 L9.500 2 L3 8 Z" fill="none" stroke="#000" stroke-width="1.100"/><path d="M1 -8 L1 4" fill="none" stroke="#000" stroke-width="1.100"/><rect x="-0.500" y="-9.500" width="3" height="3" fill="#ffff00" stroke="#c00000" stroke-width="0.900"/><circle cx="1" cy="4" r="1.8" fill="#ff00ff" stroke="#c00000" stroke-width="1"/><path d="M6.500 -9 L6.500 -3.500 M4.500 -5.500 L6.500 -3.200 L8.500 -5.500" fill="none" stroke="#00f" stroke-width="1.300"/></g><g transform="translate(572,829)"><path d="M-6 5 L9 -9" fill="none" stroke="#000" stroke-width="1.100"/><path d="M-9 0.500 L-1 -7" fill="none" stroke="#000" stroke-width="1.100" stroke-dasharray="3 1.500"/><circle cx="-5" cy="5" r="1.8" fill="#ff00ff" stroke="#c00000" stroke-width="1"/><rect x="2" y="-5" width="3" height="3" fill="#ffff00" stroke="#c00000" stroke-width="0.900"/><path d="M-2 -8 L-5.500 -4.500 M-5.500 -7.500 L-5.500 -4.300 L-2.500 -4.300" fill="none" stroke="#00f" stroke-width="1.300"/></g><g transform="translate(601,829)"><rect x="-1.500" y="-7.500" width="10" height="13" fill="#f4f4f4" stroke="#909090" stroke-width="1"/><path d="M2 -4.500 L7 -4.500 M1 -2.500 L7 -2.500 M2 -0.500 L7 -0.500 M1 1.500 L7 1.500 M2 3.500 L7 3.500" stroke="#000" stroke-width="0.900"/><path d="M-9 -8.500 L1 1.500 M1 -8.500 L-9 1.500" fill="none" stroke="#000" stroke-width="0.900"/><circle cx="-4" cy="-3.5" r="1.6" fill="#ffff00" stroke="#c00000" stroke-width="1"/></g><g transform="translate(630,829)"><path d="M-6 -5.500 L6 6 M6 -5.500 L-6 6" stroke="#e00000" stroke-width="3.400"/></g></svg>
<!-- status -->
<div class="abs" style="left:0;top:846px;width:1600px;height:23px;background:#f0eeee;border-top:1px solid #a0a0a0"></div>
<div class="abs" style="left:0;top:847px;width:1600px;height:1px;background:#fff"></div>
<div class="abs sb16" style="left:2px;top:850px">选择工具<span class="l8">: </span>没有选中对象</div>
<div class="abs" style="left:1195px;top:849px;width:1px;height:19px;background:#d4d4d4"></div>
<div class="abs" style="left:1384px;top:849px;width:1px;height:19px;background:#d4d4d4"></div>
<div class="abs sb16" style="left:1199.5px;top:851px"><span class="l8">-2295.938 2635.892</span></div>
<div class="abs" style="left:1388px;top:850px;width:22px;height:17px;border:1px solid #c4c4c4;border-radius:2px;background:#f4f4f4;color:#a8a8a8;text-align:center;font-size:15px;line-height:15px"><span class="l8">0</span></div>
<div class="abs" style="left:0;top:868px;width:1600px;height:9px;background:linear-gradient(#fafafa 0,#fafafa 1px,#1c2a26 1px,#1c2a26 2px,#34423a 2px,#34423a 100%)"></div>
<div class="abs" style="left:99px;top:869px;width:164px;height:8px;background:#ececec"></div>
<div class="abs" style="left:263px;top:869px;width:56px;height:8px;background:#2080f0"></div>
<div class="abs" style="left:319px;top:869px;width:98px;height:8px;background:linear-gradient(90deg,#26342c,#2e3e34)"></div>
<div class="abs" style="left:417px;top:869px;width:157px;height:8px;background:linear-gradient(90deg,#b4bcb4,#a4aca4 25%,#8a928a 55%,#6c746c 85%,#7a827a)"></div>
<div class="abs" style="left:578px;top:869px;width:159px;height:8px;background:linear-gradient(90deg,#b4bcb4,#a4aca4 25%,#8a928a 55%,#6c746c 85%,#7a827a)"></div>
<div class="abs" style="left:742px;top:869px;width:156px;height:8px;background:linear-gradient(90deg,#b4bcb4,#a4aca4 25%,#8a928a 55%,#6c746c 85%,#7a827a)"></div>
<div class="abs" style="left:903px;top:869px;width:157px;height:8px;background:linear-gradient(90deg,#b4bcb4,#a4aca4 25%,#8a928a 55%,#6c746c 85%,#7a827a)"></div>
<div class="abs" style="left:417px;top:869px;width:157px;height:9px;border:1px solid rgba(230,236,230,.7);border-bottom:none;border-radius:2px 2px 0 0"></div>
<div class="abs" style="left:578px;top:869px;width:159px;height:9px;border:1px solid rgba(230,236,230,.7);border-bottom:none;border-radius:2px 2px 0 0"></div>
<div class="abs" style="left:742px;top:869px;width:156px;height:9px;border:1px solid rgba(230,236,230,.7);border-bottom:none;border-radius:2px 2px 0 0"></div>
<div class="abs" style="left:903px;top:869px;width:157px;height:9px;border:1px solid rgba(230,236,230,.7);border-bottom:none;border-radius:2px 2px 0 0"></div>
<div class="abs" style="left:1064px;top:869px;width:536px;height:8px;background:linear-gradient(90deg,#34463c,#46584a 20%,#58685a 38%,#4a5c4e 50%,#3a4a40 70%,#2c3a32 90%,#28342e)"></div>
<div class="abs" style="left:1568px;top:869px;width:14px;height:8px;background:#0c0c0c;border:1px solid #9aa09a;border-bottom:none"></div>
<div class="abs" style="left:1587px;top:870px;width:12px;height:7px;background:linear-gradient(#8a908a,#6a706a);border:1px solid #b0b4b0;border-bottom:none"></div>
<div class="abs" style="left:0;top:869px;width:99px;height:8px;background:linear-gradient(90deg,#2c4034,#3a5242 60%,#42583c)"></div>
<div class="abs" style="left:752px;top:875px;width:14px;height:2px;background:#2060c0"></div>
<div class="abs" style="left:912px;top:875px;width:16px;height:2px;background:#80b020"></div>
<div class="abs" style="left:588px;top:875px;width:14px;height:2px;background:#f4f4f4"></div>
<div class="abs" style="left:432px;top:875px;width:6px;height:2px;background:#e040e0"></div>
<div class="abs" style="left:1204px;top:873px;width:8px;height:4px;border:1px solid #f0f0f0"></div>
<div class="abs" style="left:1306px;top:875px;width:2px;height:2px;background:#f0f0f0"></div><div class="abs" style="left:1310px;top:875px;width:2px;height:2px;background:#f0f0f0"></div>
<div class="abs" style="left:9px;top:864px;width:38px;height:38px;border-radius:50%;background:radial-gradient(circle at 50% 35%,#cfe6f4 0,#6aa6d0 45%,#2c5f90 75%);border:1px solid #1c4060"></div>
<div class="abs" style="left:22px;top:873px;width:6px;height:4px;background:#e86020"></div><div class="abs" style="left:30px;top:874px;width:6px;height:3px;background:#70b030"></div>
<div class="abs" style="left:108px;top:873px;width:10px;height:4px;background:#3aa0f0;border-radius:3px 3px 0 0"></div>
<div class="abs" style="left:336px;top:875px;width:14px;height:2px;background:#20c020"></div>
<!-- dialog -->
<div id="dlg" class="abs" style="left:561px;top:269px;width:297px;height:295px;border:1px solid #46525e;border-radius:7px;background:linear-gradient(100deg,#e4eefa 0%,#d3e4f6 16%,#e3eefb 23%,#d0e2f6 30%,#c8ddf4 52%,#d9e8f9 58%,#cbe0f6 66%,#c9dff6 100%);box-shadow:inset 0 0 0 1px rgba(255,255,255,.75),0 2px 8px rgba(0,0,0,.18),0 0 2px rgba(0,0,0,.25)"></div>
<div class="abs" style="left:560px;top:270px;width:80px;height:28px;background:radial-gradient(ellipse at 45% 50%,rgba(255,255,255,.55),rgba(255,255,255,0) 70%)"></div>
<div class="abs" style="left:569px;top:276px;font-size:12px;line-height:18px;white-space:nowrap;letter-spacing:-0.2px">EPS 输入</div>
<div class="abs" style="left:804px;top:270px;width:47px;height:19px;border:1px solid #5a2a28;border-top:none;border-radius:0 0 4px 4px;background:linear-gradient(#e9a99c 0,#d9816f 45%,#c8402a 50%,#c9462e 75%,#e08a6c 100%);box-shadow:inset 0 0 0 1px rgba(255,255,255,.45)"></div>
<svg style="left:805px;top:270px" width="47" height="19" viewBox="0 0 47 19"><path d="M18.500 4.500 L21.500 4.500 L23.500 7 L25.500 4.500 L28.500 4.500 L25.200 8.800 L28.700 13.200 L25.500 13.200 L23.500 10.600 L21.500 13.200 L18.300 13.200 L21.800 8.800 Z" fill="#fff" stroke="#4a2020" stroke-width="1" stroke-linejoin="round"/></svg>
<div class="abs" style="left:568px;top:298px;width:283px;height:259px;background:#f0f0f0;border:1px solid #6c7884;box-shadow:0 0 0 1px rgba(255,255,255,.6)"></div>
<div class="abs" style="left:580px;top:311px;width:260px;height:47px;border:1px solid #d5dfe5;border-radius:3px"></div>
<div class="abs song" style="left:590px;top:318.2px;font-size:12px;line-height:13px;white-space:nowrap">功能提示信息：<span class="l">EPS</span>文件主要包括矢量图形、</div>
<div class="abs song" style="left:590px;top:329.9px;font-size:12px;line-height:13px;white-space:nowrap">图像、文字和区域填充效果等部分的信息。本</div>
<div class="abs song" style="left:590px;top:341.6px;font-size:12px;line-height:13px;white-space:nowrap">输入只能提取出文件中包含的矢量图形信息。</div>
<div class="abs song" style="left:581px;top:370px;font-size:12px;line-height:15px;white-space:nowrap">直线段重点过滤精度<span class="l">(0.0001-5.0):</span></div>
<div class="abs song" style="left:769px;top:367px;width:56px;height:18px;background:#fff;border:1px solid #e3e9ef;border-top-color:#abadb3;font-size:12px;line-height:16px;padding-left:3px"><span class="l">0.01</span></div>
<div class="abs" style="left:581px;top:389px;width:13px;height:13px;border:1px solid #8e8f8f;background:linear-gradient(135deg,#d2d6da,#f4f4f4 60%,#fff);box-shadow:inset 0 0 0 1px #f4f4f4"></div>
<svg style="left:581px;top:389px" width="13" height="13" viewBox="0 0 13 13"><path d="M3 6.200 L5.300 9.500 L9.800 2.800" fill="none" stroke="#4a5f97" stroke-width="1.800"/></svg>
<div class="abs song" style="left:597px;top:389px;font-size:12px;line-height:14px;white-space:nowrap">输入图形填充的轮廓</div>
<div class="abs" style="left:581px;top:410px;width:259px;height:105px;background:#fff;border:1px solid #e3e9ef;border-top-color:#abadb3"></div>
<div class="abs" style="left:822px;top:411px;width:17px;height:86px;background:linear-gradient(90deg,#e8e8e8,#f2f2f2 5px,#f0f0f0 12px,#eaeaea)"></div>
<div class="abs" style="left:582px;top:498px;width:239px;height:16px;background:linear-gradient(#e8e8e8,#f2f2f2 5px,#f0f0f0 12px,#eaeaea)"></div>
<div class="abs" style="left:821px;top:497px;width:18px;height:17px;background:#f0f0f0"></div>
<svg style="left:0;top:0" width="1600" height="877" viewBox="0 0 1600 877"><path d="M827 422 L830.500 418 L834 422 Z" fill="#8a8a8a"/><path d="M827 487 L830.500 491 L834 487 Z" fill="#8a8a8a"/><path d="M591.500 502 L587.500 505.500 L591.500 509 Z" fill="#8a8a8a"/><path d="M810.500 502 L814.500 505.500 L810.500 509 Z" fill="#8a8a8a"/></svg>
<div class="btn7 song" style="left:590px;top:522px;width:73px;height:21px;line-height:21px">文件信息</div>
<div class="btn7 song" style="left:674px;top:522px;width:73px;height:21px;line-height:21px">确定</div>
<div class="btn7 song def" style="left:755px;top:522px;width:73px;height:21px;line-height:21px">取消</div>
<!-- overlay -->
<svg style="left:0;top:0" width="1600" height="877" viewBox="0 0 1600 877"><path d="M655.5 398.5 L678.5 391 L680 398.5 L758.5 418.5 L676.5 407 L674.5 412.5 Z" fill="#800000"/><path d="M710.5 532.5 L729.7 547.1 L724.2 549.9 L744.5 601.9 L715.7 554.8 L710.3 556.7 Z" fill="#800000"/><circle cx="777" cy="416" r="10" fill="#f03232"/><circle cx="762" cy="604" r="10" fill="#f03232"/><text x="777" y="420.8" text-anchor="middle" font-family="Liberation Sans, sans-serif" font-weight="normal" font-size="13.5px" fill="#fff" stroke="#fff" stroke-width="0.5">1</text><text x="762" y="608.8" text-anchor="middle" font-family="Liberation Sans, sans-serif" font-weight="normal" font-size="13.5px" fill="#fff" stroke="#fff" stroke-width="0.5">2</text></svg>
<div class="abs" style="left:1281px;top:805px;font-family:'Liberation Sans','Noto Sans CJK SC',sans-serif;font-size:35px;line-height:48px;font-weight:700;color:#fff;white-space:nowrap;text-shadow:2px 3px 0 #111,1px 1.5px 0 #111,2.5px 2px 0 #111;letter-spacing:6px">头条<span style="font-size:42px;font-weight:400;letter-spacing:1px;margin-left:7px;position:relative;top:3px">@</span>南北二手</div>
<div class="abs" style="left:1366px;top:811px;font-family:'Liberation Sans','Noto Sans CJK SC',sans-serif;font-size:31px;line-height:36px;color:#000;white-space:nowrap;transform-origin:0 0;transform:scaleX(0.82);letter-spacing:-1px;-webkit-text-stroke:.7px #000"><span style="letter-spacing:3.4px">www.rjtj.cn</span>软荐网</div>
</div>
</body></html>
